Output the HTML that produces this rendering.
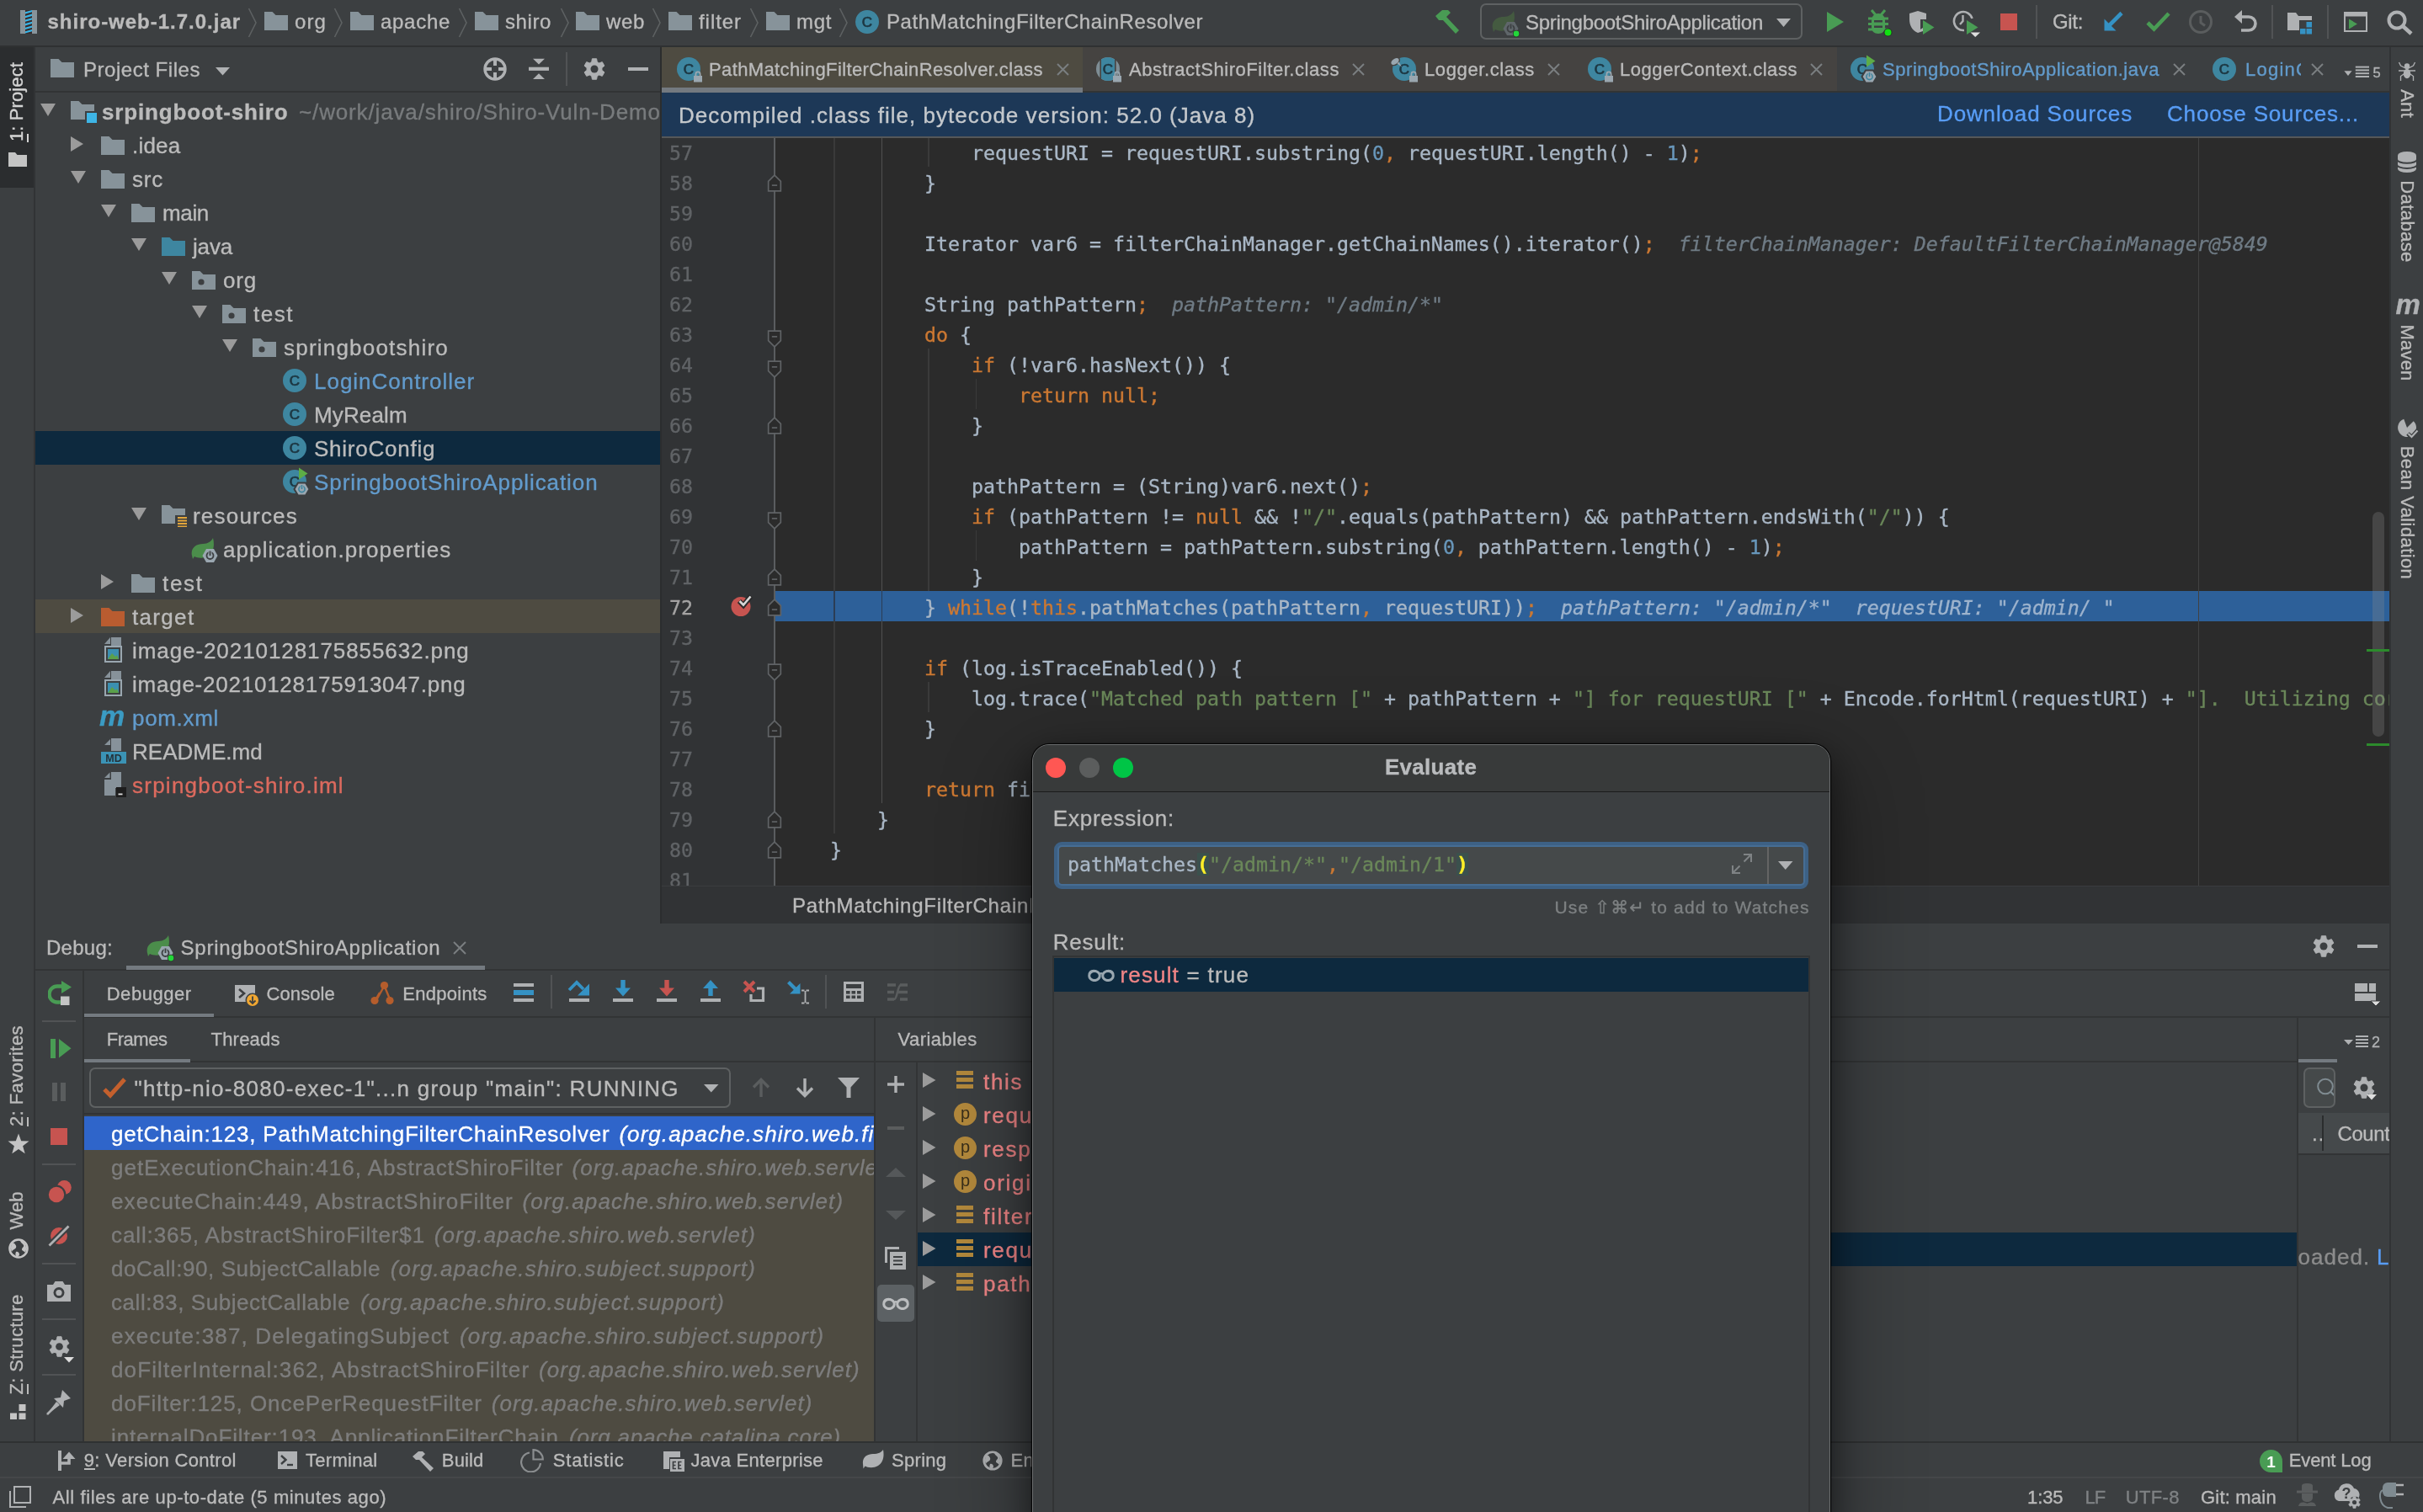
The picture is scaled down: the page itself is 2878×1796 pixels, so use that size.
<!DOCTYPE html>
<html lang="en"><head><meta charset="utf-8"><title>IDE</title>
<style>
html,body{margin:0;padding:0;}
body{width:2878px;height:1796px;overflow:hidden;background:#3c3f41;position:relative;font-family:"Liberation Sans", sans-serif;}
div,span.t,svg{position:absolute;box-sizing:border-box;}
span.t{white-space:pre;}
span.t{-webkit-text-stroke-width:0.35px;}span.c{font-family:"DejaVu Sans Mono","Liberation Mono",monospace;font-size:23.25px;line-height:36px;}
</style></head><body>
<div id="root" style="left:0;top:0;width:2878px;height:1796px;will-change:transform;">
<div style="left:0px;top:54px;width:2878px;height:2px;background:#2f3132;"></div>
<div style="left:40px;top:56px;width:2px;height:1657px;background:#313335;"></div>
<div style="left:2838px;top:56px;width:2px;height:1657px;background:#313335;"></div>
<div style="left:784px;top:56px;width:2px;height:1041px;background:#2b2d2e;"></div>
<svg style="left:24px;top:12px;" width="20" height="28" viewBox="0 0 20 28"><rect x="0" y="0" width="6" height="28" fill="#87939a"/><rect x="14" y="0" width="6" height="28" fill="#87939a"/><rect x="6" y="0" width="8" height="28" fill="#3a2c2c"/><path d="M6,2.3L14,0V2.3L6,4.6Z" fill="#35b5e8"/><path d="M6,6.8999999999999995L14,4.6V6.8999999999999995L6,9.2Z" fill="#35b5e8"/><path d="M6,11.5L14,9.2V11.5L6,13.799999999999999Z" fill="#35b5e8"/><path d="M6,16.1L14,13.8V16.1L6,18.4Z" fill="#35b5e8"/><path d="M6,20.7L14,18.4V20.7L6,23.0Z" fill="#35b5e8"/><path d="M6,25.3L14,23V25.3L6,27.6Z" fill="#35b5e8"/></svg>
<span class="t" style="left:56.5px;top:10.2px;line-height:31px;font-size:24px;color:#bbbbbb;font-weight:bold;letter-spacing:0.99px;">shiro-web-1.7.0.jar</span>
<svg style="left:544px;top:9px;" width="12" height="36" viewBox="0 0 12 36"><path d="M1.5,1L10,18L1.5,35" fill="none" stroke="#5e6263" stroke-width="1.6"/></svg>
<svg style="left:294px;top:9px;" width="12" height="36" viewBox="0 0 12 36"><path d="M1.5,1L10,18L1.5,35" fill="none" stroke="#5e6263" stroke-width="1.6"/></svg>
<svg style="left:314px;top:14px;" width="28" height="22" viewBox="0 0 28 22"><path d="M0,0H9.5L13.5,4H28V22H0Z" fill="#87939a"/></svg>
<span class="t" style="left:350px;top:10.2px;line-height:31px;font-size:24px;color:#bbbbbb;letter-spacing:1.1px;">org</span>
<svg style="left:396px;top:9px;" width="12" height="36" viewBox="0 0 12 36"><path d="M1.5,1L10,18L1.5,35" fill="none" stroke="#5e6263" stroke-width="1.6"/></svg>
<svg style="left:416px;top:14px;" width="28" height="22" viewBox="0 0 28 22"><path d="M0,0H9.5L13.5,4H28V22H0Z" fill="#87939a"/></svg>
<span class="t" style="left:452px;top:10.2px;line-height:31px;font-size:24px;color:#bbbbbb;letter-spacing:0.71px;">apache</span>
<svg style="left:564px;top:14px;" width="28" height="22" viewBox="0 0 28 22"><path d="M0,0H9.5L13.5,4H28V22H0Z" fill="#87939a"/></svg>
<span class="t" style="left:600px;top:10.2px;line-height:31px;font-size:24px;color:#bbbbbb;letter-spacing:0.59px;">shiro</span>
<svg style="left:665px;top:9px;" width="12" height="36" viewBox="0 0 12 36"><path d="M1.5,1L10,18L1.5,35" fill="none" stroke="#5e6263" stroke-width="1.6"/></svg>
<svg style="left:684px;top:14px;" width="28" height="22" viewBox="0 0 28 22"><path d="M0,0H9.5L13.5,4H28V22H0Z" fill="#87939a"/></svg>
<span class="t" style="left:720px;top:10.2px;line-height:31px;font-size:24px;color:#bbbbbb;letter-spacing:0.66px;">web</span>
<svg style="left:774px;top:9px;" width="12" height="36" viewBox="0 0 12 36"><path d="M1.5,1L10,18L1.5,35" fill="none" stroke="#5e6263" stroke-width="1.6"/></svg>
<svg style="left:794px;top:14px;" width="28" height="22" viewBox="0 0 28 22"><path d="M0,0H9.5L13.5,4H28V22H0Z" fill="#87939a"/></svg>
<span class="t" style="left:830px;top:10.2px;line-height:31px;font-size:24px;color:#bbbbbb;letter-spacing:0.94px;">filter</span>
<svg style="left:890px;top:9px;" width="12" height="36" viewBox="0 0 12 36"><path d="M1.5,1L10,18L1.5,35" fill="none" stroke="#5e6263" stroke-width="1.6"/></svg>
<svg style="left:910px;top:14px;" width="28" height="22" viewBox="0 0 28 22"><path d="M0,0H9.5L13.5,4H28V22H0Z" fill="#87939a"/></svg>
<span class="t" style="left:946px;top:10.2px;line-height:31px;font-size:24px;color:#bbbbbb;letter-spacing:0.66px;">mgt</span>
<svg style="left:996px;top:9px;" width="12" height="36" viewBox="0 0 12 36"><path d="M1.5,1L10,18L1.5,35" fill="none" stroke="#5e6263" stroke-width="1.6"/></svg>
<svg style="left:1014px;top:8px;" width="36" height="36" viewBox="-2 -4 36 36"><circle cx="14" cy="14" r="14" fill="#3e86a0"/><text x="14" y="20" text-anchor="middle" font-family="Liberation Sans, sans-serif" font-size="17" fill="#1d3742" stroke="#1d3742" stroke-width="0.7">C</text></svg>
<span class="t" style="left:1053px;top:10.2px;line-height:31px;font-size:24px;color:#bbbbbb;letter-spacing:0.6px;">PathMatchingFilterChainResolver</span>
<div style="left:0px;top:56px;width:40px;height:167px;background:#2b2d2f;"></div>
<span class="t" style="left:19.4px;top:121.0px;line-height:29px;font-size:22px;color:#d4d4d4;letter-spacing:0.11px;transform:translate(-50%,-50%) rotate(-90deg);">1: Project</span>
<svg style="left:10px;top:181px;" width="22" height="17" viewBox="0 0 22 17"><path d="M0,0H8L10.5,3H22V17H0Z" fill="#c4c4c4"/></svg>
<span class="t" style="left:19.4px;top:1278.0px;line-height:29px;font-size:22px;color:#bbbbbb;letter-spacing:0.42px;transform:translate(-50%,-50%) rotate(-90deg);">2: Favorites</span>
<svg style="left:9px;top:1346px;" width="26" height="25" viewBox="0 0 26 25"><path d="M13,0.5L16.2,9.3L25.5,9.6L18.1,15.3L20.7,24.3L13,19L5.3,24.3L7.9,15.3L0.5,9.6L9.8,9.3Z" fill="#c4c4c4"/></svg>
<span class="t" style="left:19.4px;top:1437.5px;line-height:29px;font-size:22px;color:#bbbbbb;letter-spacing:0.05px;transform:translate(-50%,-50%) rotate(-90deg);">Web</span>
<svg style="left:10px;top:1471px;" width="24" height="24" viewBox="0 0 24 24"><circle cx="12" cy="12" r="10.5" fill="none" stroke="#c4c4c4" stroke-width="2.6"/><path d="M5,5C8,6 10,9 9,11C8,13 5,13 4,16C3,14 2,9 5,5ZM14,2C14,5 17,6 18,8C19,10 16,11 16,13C16,15 19,15 20,17C22,13 22,5 14,2ZM9,16C11,15 13,17 13,19C13,21 11,22 10,22C8,21 8,18 9,16Z" fill="#c4c4c4"/></svg>
<span class="t" style="left:19.4px;top:1596.5px;line-height:29px;font-size:22px;color:#bbbbbb;letter-spacing:0.34px;transform:translate(-50%,-50%) rotate(-90deg);">Z: Structure</span>
<svg style="left:12px;top:1667.5px;" width="19" height="18.5" viewBox="0 0 19 18.5"><rect x="0" y="10.5" width="8" height="8" fill="#c4c4c4"/><rect x="10.5" y="10.5" width="8" height="8" fill="#c4c4c4"/><rect x="10.5" y="0" width="8" height="8" fill="#c4c4c4"/></svg>
<div style="left:31.5px;top:159px;width:2px;height:10px;background:#d4d4d4;"></div>
<div style="left:31.5px;top:1327px;width:2px;height:11px;background:#bbbbbb;"></div>
<div style="left:31.5px;top:1644px;width:2px;height:12px;background:#bbbbbb;"></div>
<svg style="left:60px;top:70px;" width="28" height="22" viewBox="0 0 28 22"><path d="M0,0H9.5L13.5,4H28V22H0Z" fill="#87939a"/></svg>
<span class="t" style="left:99px;top:67.2px;line-height:31px;font-size:24px;color:#bbbbbb;letter-spacing:0.53px;">Project Files</span>
<svg style="left:256px;top:80px;" width="17" height="9.5" viewBox="0 0 17 9.5"><path d="M0,0H17L8.5,9.5Z" fill="#afb1b3"/></svg>
<svg style="left:574px;top:68px;" width="28" height="28" viewBox="0 0 28 28"><circle cx="14" cy="14" r="12" fill="none" stroke="#afb1b3" stroke-width="3.4"/><path d="M14,1V10M14,18V27M1,14H10M18,14H27" stroke="#afb1b3" stroke-width="4"/></svg>
<svg style="left:627px;top:69px;" width="26" height="26" viewBox="0 0 26 26"><path d="M1,12.8H25" stroke="#afb1b3" stroke-width="4.2"/><path d="M6,0.7H20L13,7.4Z M6,25H20L13,18.3Z" fill="#afb1b3"/></svg>
<div style="left:672px;top:62px;width:2px;height:40px;background:#515355;"></div>
<svg style="left:693px;top:69px;" width="26" height="26" viewBox="-0.5 -0.5 27 27"><path d="M10.29,0.29L15.71,0.29L16.40,4.24L18.89,5.67L22.66,4.30L25.37,8.99L22.29,11.56L22.29,14.44L25.37,17.01L22.66,21.70L18.89,20.33L16.40,21.76L15.71,25.71L10.29,25.71L9.60,21.76L7.11,20.33L3.34,21.70L0.63,17.01L3.71,14.44L3.71,11.56L0.63,8.99L3.34,4.30L7.11,5.67L9.60,4.24Z" fill="#afb1b3" stroke="#afb1b3" stroke-width="1" stroke-linejoin="round"/><circle cx="13" cy="13" r="4.7" fill="#3c3f41"/></svg>
<div style="left:746px;top:80px;width:24px;height:4px;background:#afb1b3;"></div>
<div style="left:42px;top:108px;width:742px;height:2px;background:#323435;"></div>
<svg style="left:48px;top:123px;" width="18" height="15" viewBox="0 0 18 15"><path d="M0,0H18L9.0,15Z" fill="#9b9b9b"/></svg>
<svg style="left:84px;top:120px;" width="28" height="22" viewBox="0 0 28 22"><path d="M0,0H9.5L13.5,4H28V22H0Z" fill="#87939a"/></svg><svg style="left:101px;top:132px;" width="14" height="14" viewBox="0 0 14 14"><rect x="0" y="0" width="14" height="14" fill="#3c3f41"/><rect x="2" y="2" width="12" height="12" fill="#3eb5e5"/></svg>
<span class="t" style="left:121px;top:116.0px;line-height:34px;font-size:26px;color:#bbbbbb;font-weight:bold;letter-spacing:0.84px;">srpingboot-shiro</span>
<span class="t" style="left:355px;top:116.0px;line-height:34px;font-size:26px;color:#787b7d;letter-spacing:0.86px;width:429px;overflow:hidden;">~/work/java/shiro/Shiro-Vuln-Demo</span>
<svg style="left:84px;top:162px;" width="15" height="18" viewBox="0 0 15 18"><path d="M0,0L15,9.0L0,18Z" fill="#9b9b9b"/></svg>
<svg style="left:120px;top:162px;" width="28" height="22" viewBox="0 0 28 22"><path d="M0,0H9.5L13.5,4H28V22H0Z" fill="#87939a"/></svg>
<span class="t" style="left:157px;top:156.0px;line-height:34px;font-size:26px;color:#bbbbbb;letter-spacing:0.22px;">.idea</span>
<svg style="left:84px;top:203px;" width="18" height="15" viewBox="0 0 18 15"><path d="M0,0H18L9.0,15Z" fill="#9b9b9b"/></svg>
<svg style="left:120px;top:202px;" width="28" height="22" viewBox="0 0 28 22"><path d="M0,0H9.5L13.5,4H28V22H0Z" fill="#87939a"/></svg>
<span class="t" style="left:157px;top:196.0px;line-height:34px;font-size:26px;color:#bbbbbb;letter-spacing:0.78px;">src</span>
<svg style="left:120px;top:243px;" width="18" height="15" viewBox="0 0 18 15"><path d="M0,0H18L9.0,15Z" fill="#9b9b9b"/></svg>
<svg style="left:156px;top:242px;" width="28" height="22" viewBox="0 0 28 22"><path d="M0,0H9.5L13.5,4H28V22H0Z" fill="#87939a"/></svg>
<span class="t" style="left:193px;top:236.0px;line-height:34px;font-size:26px;color:#bbbbbb;letter-spacing:-0.34px;">main</span>
<svg style="left:156px;top:283px;" width="18" height="15" viewBox="0 0 18 15"><path d="M0,0H18L9.0,15Z" fill="#9b9b9b"/></svg>
<svg style="left:192px;top:282px;" width="28" height="22" viewBox="0 0 28 22"><path d="M0,0H9.5L13.5,4H28V22H0Z" fill="#3e86a0"/></svg>
<span class="t" style="left:229px;top:276.0px;line-height:34px;font-size:26px;color:#bbbbbb;letter-spacing:-0.18px;">java</span>
<svg style="left:192px;top:323px;" width="18" height="15" viewBox="0 0 18 15"><path d="M0,0H18L9.0,15Z" fill="#9b9b9b"/></svg>
<svg style="left:228px;top:322px;" width="28" height="22" viewBox="0 0 28 22"><path d="M0,0H9.5L13.5,4H28V22H0Z" fill="#87939a"/><circle cx="11" cy="13" r="3.6" fill="#3c3f41"/></svg>
<span class="t" style="left:265px;top:316.0px;line-height:34px;font-size:26px;color:#bbbbbb;letter-spacing:0.81px;">org</span>
<svg style="left:228px;top:363px;" width="18" height="15" viewBox="0 0 18 15"><path d="M0,0H18L9.0,15Z" fill="#9b9b9b"/></svg>
<svg style="left:264px;top:362px;" width="28" height="22" viewBox="0 0 28 22"><path d="M0,0H9.5L13.5,4H28V22H0Z" fill="#87939a"/><circle cx="11" cy="13" r="3.6" fill="#3c3f41"/></svg>
<span class="t" style="left:301px;top:356.0px;line-height:34px;font-size:26px;color:#bbbbbb;letter-spacing:1.52px;">test</span>
<svg style="left:264px;top:403px;" width="18" height="15" viewBox="0 0 18 15"><path d="M0,0H18L9.0,15Z" fill="#9b9b9b"/></svg>
<svg style="left:300px;top:402px;" width="28" height="22" viewBox="0 0 28 22"><path d="M0,0H9.5L13.5,4H28V22H0Z" fill="#87939a"/><circle cx="11" cy="13" r="3.6" fill="#3c3f41"/></svg>
<span class="t" style="left:337px;top:396.0px;line-height:34px;font-size:26px;color:#bbbbbb;letter-spacing:1.21px;">springbootshiro</span>
<svg style="left:334px;top:434px;" width="36" height="36" viewBox="-2 -4 36 36"><circle cx="14" cy="14" r="14" fill="#3e86a0"/><text x="14" y="20" text-anchor="middle" font-family="Liberation Sans, sans-serif" font-size="17" fill="#1d3742" stroke="#1d3742" stroke-width="0.7">C</text></svg>
<span class="t" style="left:373px;top:436.0px;line-height:34px;font-size:26px;color:#629bcc;letter-spacing:0.98px;">LoginController</span>
<svg style="left:334px;top:474px;" width="36" height="36" viewBox="-2 -4 36 36"><circle cx="14" cy="14" r="14" fill="#3e86a0"/><text x="14" y="20" text-anchor="middle" font-family="Liberation Sans, sans-serif" font-size="17" fill="#1d3742" stroke="#1d3742" stroke-width="0.7">C</text></svg>
<span class="t" style="left:373px;top:476.0px;line-height:34px;font-size:26px;color:#bbbbbb;letter-spacing:0.14px;">MyRealm</span>
<div style="left:42px;top:512px;width:742px;height:40px;background:#0d293e;"></div>
<svg style="left:334px;top:514px;" width="36" height="36" viewBox="-2 -4 36 36"><circle cx="14" cy="14" r="14" fill="#3e86a0"/><text x="14" y="20" text-anchor="middle" font-family="Liberation Sans, sans-serif" font-size="17" fill="#1d3742" stroke="#1d3742" stroke-width="0.7">C</text></svg>
<span class="t" style="left:373px;top:516.0px;line-height:34px;font-size:26px;color:#bbbbbb;letter-spacing:0.76px;">ShiroConfig</span>
<svg style="left:334px;top:554px;" width="36" height="36" viewBox="-2 -4 36 36"><circle cx="14" cy="14" r="14" fill="#3e86a0"/><text x="14" y="20" text-anchor="middle" font-family="Liberation Sans, sans-serif" font-size="17" fill="#1d3742" stroke="#1d3742" stroke-width="0.7">C</text></svg><svg style="left:348px;top:552px;" width="24" height="40" viewBox="0 0 24 40"><path d="M7,3.5L17.5,10.5L7,17.5Z" fill="#5dad46"/><path d="M6,21.5H15L19.5,29L15,36.5H6L1.5,29Z" fill="#9aa7b0" stroke="#3c3f41" stroke-width="2"/><circle cx="10.5" cy="29" r="3.6" fill="none" stroke="#3e86a0" stroke-width="1.6"/><path d="M10.5,24V29" stroke="#9aa7b0" stroke-width="3.6"/><path d="M10.5,24V29" stroke="#3e86a0" stroke-width="1.6"/></svg>
<span class="t" style="left:373px;top:556.0px;line-height:34px;font-size:26px;color:#629bcc;letter-spacing:0.92px;">SpringbootShiroApplication</span>
<svg style="left:156px;top:603px;" width="18" height="15" viewBox="0 0 18 15"><path d="M0,0H18L9.0,15Z" fill="#9b9b9b"/></svg>
<svg style="left:192px;top:600px;" width="28" height="22" viewBox="0 0 28 22"><path d="M0,0H9.5L13.5,4H28V22H0Z" fill="#87939a"/></svg><svg style="left:208px;top:612px;" width="14" height="14" viewBox="0 0 14 14"><rect width="14" height="14" fill="#3c3f41"/><rect x="3" y="2" width="11" height="2" fill="#e2a53a"/><rect x="3" y="5.5" width="11" height="2" fill="#e2a53a"/><rect x="3" y="9" width="11" height="2" fill="#e2a53a"/><rect x="3" y="12.5" width="11" height="2" fill="#e2a53a"/></svg>
<span class="t" style="left:229px;top:596.0px;line-height:34px;font-size:26px;color:#bbbbbb;letter-spacing:1.2px;">resources</span>
<svg style="left:227px;top:639px;" width="34" height="32" viewBox="0 0 34 32"><path d="M1,21C-1,12 6,7 14,7C20,7 24,4 26,0C28,8 27,16 21,21C15,25 8,24 4,22L2,25Z" fill="#4b8d4b"/><path d="M18,13H27L31.5,21L27,29H18L13.5,21Z" fill="#9aa7b0"/><circle cx="22.5" cy="21" r="4" fill="none" stroke="#3c3f41" stroke-width="1.8"/><path d="M22.5,15.5V21" stroke="#9aa7b0" stroke-width="4"/><path d="M22.5,15.5V21" stroke="#3c3f41" stroke-width="1.8"/></svg>
<span class="t" style="left:265px;top:636.0px;line-height:34px;font-size:26px;color:#bbbbbb;letter-spacing:1.1px;">application.properties</span>
<svg style="left:120px;top:682px;" width="15" height="18" viewBox="0 0 15 18"><path d="M0,0L15,9.0L0,18Z" fill="#9b9b9b"/></svg>
<svg style="left:156px;top:682px;" width="28" height="22" viewBox="0 0 28 22"><path d="M0,0H9.5L13.5,4H28V22H0Z" fill="#87939a"/></svg>
<span class="t" style="left:193px;top:676.0px;line-height:34px;font-size:26px;color:#bbbbbb;letter-spacing:1.72px;">test</span>
<div style="left:42px;top:712px;width:742px;height:40px;background:#4e4b41;"></div>
<svg style="left:84px;top:722px;" width="15" height="18" viewBox="0 0 15 18"><path d="M0,0L15,9.0L0,18Z" fill="#9b9b9b"/></svg>
<svg style="left:120px;top:722px;" width="28" height="22" viewBox="0 0 28 22"><path d="M0,0H9.5L13.5,4H28V22H0Z" fill="#b95c30"/></svg>
<span class="t" style="left:157px;top:716.0px;line-height:34px;font-size:26px;color:#bbbbbb;letter-spacing:1.33px;">target</span>
<svg style="left:124px;top:757px;" width="22" height="30" viewBox="0 0 22 30"><path d="M8,0H20V12H8Z M0,8L7,0V8Z" fill="#9aa7b0" opacity="0.8"/><rect x="1" y="11" width="19" height="18" fill="none" stroke="#9aa7b0" stroke-width="2"/><rect x="4" y="14" width="13" height="12" fill="#3b8fb0"/><path d="M4,26L9,19L13,23L15,21L17,26Z" fill="#5ba04a"/></svg>
<span class="t" style="left:157px;top:756.0px;line-height:34px;font-size:26px;color:#bbbbbb;letter-spacing:0.92px;">image-20210128175855632.png</span>
<svg style="left:124px;top:797px;" width="22" height="30" viewBox="0 0 22 30"><path d="M8,0H20V12H8Z M0,8L7,0V8Z" fill="#9aa7b0" opacity="0.8"/><rect x="1" y="11" width="19" height="18" fill="none" stroke="#9aa7b0" stroke-width="2"/><rect x="4" y="14" width="13" height="12" fill="#3b8fb0"/><path d="M4,26L9,19L13,23L15,21L17,26Z" fill="#5ba04a"/></svg>
<span class="t" style="left:157px;top:796.0px;line-height:34px;font-size:26px;color:#bbbbbb;letter-spacing:0.76px;">image-20210128175913047.png</span>

<span class="t" style="left:157px;top:836.0px;line-height:34px;font-size:26px;color:#629bcc;letter-spacing:0.68px;">pom.xml</span>
<span class="t" style="left:118px;top:828.2px;line-height:44px;font-size:34px;color:#3b9bc3;font-weight:bold;font-style:italic;">m</span>
<svg style="left:120px;top:877px;" width="30" height="30" viewBox="0 0 30 30"><path d="M12,0H24V15H12Z M4,8L11,1V8Z" fill="#9aa7b0" opacity="0.8"/><rect x="0" y="16" width="30" height="14" fill="#3b93b5"/><text x="15" y="28" text-anchor="middle" font-family="Liberation Sans, sans-serif" font-weight="bold" font-size="12.5" fill="#25323a">MD</text></svg>
<span class="t" style="left:157px;top:876.0px;line-height:34px;font-size:26px;color:#bbbbbb;letter-spacing:0.02px;">README.md</span>
<svg style="left:124px;top:917px;" width="26" height="30" viewBox="0 0 26 30"><path d="M8,0H20V19H13V28H0V9H8Z M0,7L6.5,0.5V7Z" fill="#9aa7b0" opacity="0.8"/><rect x="14" y="18" width="12" height="12" fill="#1e1e1e"/><rect x="16.5" y="25.5" width="5" height="1.8" fill="#dddddd"/></svg>
<span class="t" style="left:157px;top:916.0px;line-height:34px;font-size:26px;color:#dc6a5e;letter-spacing:1.25px;">srpingboot-shiro.iml</span>
<div style="left:786px;top:56px;width:2052px;height:54px;background:#3c3f41;"></div>
<div style="left:786px;top:56px;width:1396px;height:52px;background:#454341;"></div>
<div style="left:786px;top:56px;width:500px;height:48px;background:#4e4b41;"></div>
<div style="left:786px;top:108px;width:2052px;height:2px;background:#323435;"></div>
<div style="left:786px;top:104px;width:500px;height:6px;background:#747a80;"></div>
<svg style="left:802px;top:64px;" width="36" height="36" viewBox="-2 -4 36 36"><circle cx="14" cy="14" r="14" fill="#3e86a0"/><text x="14" y="20" text-anchor="middle" font-family="Liberation Sans, sans-serif" font-size="17" fill="#1d3742" stroke="#1d3742" stroke-width="0.7">C</text><rect x="20" y="22" width="10" height="7.5" fill="#9aa7b0"/><path d="M22.4,22V19.9a2.6,2.6 0 0 1 5.2,0V22" fill="none" stroke="#9aa7b0" stroke-width="1.8"/></svg>
<span class="t" style="left:842px;top:67.9px;line-height:29px;font-size:22px;color:#bbbbbb;letter-spacing:0.38px;">PathMatchingFilterChainResolver.class</span>
<svg style="left:1255px;top:75px;" width="15" height="15" viewBox="0 0 15 15"><path d="M1,1L14,14M14,1L1,14" stroke="#7a7e80" stroke-width="2" fill="none"/></svg>
<svg style="left:1300px;top:64px;" width="36" height="36" viewBox="-2 -4 36 36"><circle cx="14" cy="14" r="14" fill="#7e8d95"/><path d="M6,2.5A14,14 0 0 1 22,2.5V25.5A14,14 0 0 1 6,25.5Z" fill="#3e86a0"/><path d="M5.2,0V28M22.8,0V28" stroke="#454341" stroke-width="1.6"/><text x="14" y="20" text-anchor="middle" font-family="Liberation Sans, sans-serif" font-size="17" fill="#1d3742" stroke="#1d3742" stroke-width="0.7">C</text><rect x="20" y="22" width="10" height="7.5" fill="#9aa7b0"/><path d="M22.4,22V19.9a2.6,2.6 0 0 1 5.2,0V22" fill="none" stroke="#9aa7b0" stroke-width="1.8"/></svg>
<span class="t" style="left:1341px;top:67.9px;line-height:29px;font-size:22px;color:#bbbbbb;letter-spacing:0.56px;">AbstractShiroFilter.class</span>
<svg style="left:1606px;top:75px;" width="15" height="15" viewBox="0 0 15 15"><path d="M1,1L14,14M14,1L1,14" stroke="#7a7e80" stroke-width="2" fill="none"/></svg>
<svg style="left:1652px;top:64px;" width="36" height="36" viewBox="-2 -4 36 36"><circle cx="14" cy="14" r="14" fill="#3e86a0"/><text x="14" y="20" text-anchor="middle" font-family="Liberation Sans, sans-serif" font-size="17" fill="#1d3742" stroke="#1d3742" stroke-width="0.7">C</text><rect x="20" y="22" width="10" height="7.5" fill="#9aa7b0"/><path d="M22.4,22V19.9a2.6,2.6 0 0 1 5.2,0V22" fill="none" stroke="#9aa7b0" stroke-width="1.8"/></svg>
<svg style="left:1650px;top:64px;" width="18" height="18" viewBox="0 0 18 18"><ellipse cx="7" cy="9" rx="6.6" ry="4.6" transform="rotate(-35 7 9)" fill="#454341"/><ellipse cx="7" cy="9" rx="5.2" ry="3.2" transform="rotate(-35 7 9)" fill="#9aa7b0"/><path d="M9.5,11.5L15,15.5L11.5,9.5Z" fill="#9aa7b0"/></svg>
<span class="t" style="left:1692px;top:67.9px;line-height:29px;font-size:22px;color:#bbbbbb;letter-spacing:0.62px;">Logger.class</span>
<svg style="left:1838px;top:75px;" width="15" height="15" viewBox="0 0 15 15"><path d="M1,1L14,14M14,1L1,14" stroke="#7a7e80" stroke-width="2" fill="none"/></svg>
<svg style="left:1884px;top:64px;" width="36" height="36" viewBox="-2 -4 36 36"><circle cx="14" cy="14" r="14" fill="#3e86a0"/><text x="14" y="20" text-anchor="middle" font-family="Liberation Sans, sans-serif" font-size="17" fill="#1d3742" stroke="#1d3742" stroke-width="0.7">C</text><rect x="20" y="22" width="10" height="7.5" fill="#9aa7b0"/><path d="M22.4,22V19.9a2.6,2.6 0 0 1 5.2,0V22" fill="none" stroke="#9aa7b0" stroke-width="1.8"/></svg>
<span class="t" style="left:1924px;top:67.9px;line-height:29px;font-size:22px;color:#bbbbbb;letter-spacing:0.55px;">LoggerContext.class</span>
<svg style="left:2150px;top:75px;" width="15" height="15" viewBox="0 0 15 15"><path d="M1,1L14,14M14,1L1,14" stroke="#7a7e80" stroke-width="2" fill="none"/></svg>
<svg style="left:2196px;top:64px;" width="36" height="36" viewBox="-2 -4 36 36"><circle cx="14" cy="14" r="14" fill="#3e86a0"/><text x="14" y="20" text-anchor="middle" font-family="Liberation Sans, sans-serif" font-size="17" fill="#1d3742" stroke="#1d3742" stroke-width="0.7">C</text></svg><svg style="left:2210px;top:62px;" width="24" height="40" viewBox="0 0 24 40"><path d="M7,3.5L17.5,10.5L7,17.5Z" fill="#5dad46"/><path d="M6,21.5H15L19.5,29L15,36.5H6L1.5,29Z" fill="#9aa7b0" stroke="#3c3f41" stroke-width="2"/><circle cx="10.5" cy="29" r="3.6" fill="none" stroke="#3e86a0" stroke-width="1.6"/><path d="M10.5,24V29" stroke="#9aa7b0" stroke-width="3.6"/><path d="M10.5,24V29" stroke="#3e86a0" stroke-width="1.6"/></svg>
<span class="t" style="left:2236px;top:67.9px;line-height:29px;font-size:22px;color:#629bcc;letter-spacing:0.55px;">SpringbootShiroApplication.java</span>
<svg style="left:2581px;top:75px;" width="15" height="15" viewBox="0 0 15 15"><path d="M1,1L14,14M14,1L1,14" stroke="#7a7e80" stroke-width="2" fill="none"/></svg>
<svg style="left:2626px;top:64px;" width="36" height="36" viewBox="-2 -4 36 36"><circle cx="14" cy="14" r="14" fill="#3e86a0"/><text x="14" y="20" text-anchor="middle" font-family="Liberation Sans, sans-serif" font-size="17" fill="#1d3742" stroke="#1d3742" stroke-width="0.7">C</text></svg>
<span class="t" style="left:2667px;top:67.9px;line-height:29px;font-size:22px;color:#629bcc;letter-spacing:1.25px;width:65.5px;overflow:hidden;">LoginController.java</span>
<svg style="left:2745px;top:75px;" width="15" height="15" viewBox="0 0 15 15"><path d="M1,1L14,14M14,1L1,14" stroke="#7a7e80" stroke-width="2" fill="none"/></svg>
<svg style="left:2784px;top:78px;" width="44" height="20" viewBox="0 0 44 20"><path d="M0.4,6.2H9.6L5,12Z" fill="#afb1b3"/><rect x="13.8" y="0.6" width="16.2" height="2" fill="#afb1b3"/><rect x="13.8" y="4.4" width="16.2" height="2" fill="#afb1b3"/><rect x="13.8" y="8.2" width="16.2" height="2" fill="#afb1b3"/><rect x="13.8" y="12" width="16.2" height="2" fill="#afb1b3"/></svg>
<span class="t" style="left:2818.5px;top:76.0px;line-height:21px;font-size:16.5px;color:#afb1b3;">5</span>
<div style="left:786px;top:110px;width:2052px;height:52px;background:#1d3857;"></div>
<div style="left:786px;top:162px;width:2052px;height:2px;background:#555759;"></div>
<span class="t" style="left:806px;top:119.5px;line-height:34px;font-size:26px;color:#c4c8cc;letter-spacing:1.03px;">Decompiled .class file, bytecode version: 52.0 (Java 8)</span>
<span class="t" style="left:2301px;top:117.5px;line-height:34px;font-size:26px;color:#589df6;letter-spacing:0.86px;">Download Sources</span>
<span class="t" style="left:2574px;top:117.5px;line-height:34px;font-size:26px;color:#589df6;letter-spacing:0.83px;">Choose Sources...</span>
<div id="code" style="left:786px;top:164px;width:2052px;height:889px;background:#2b2b2b;overflow:hidden;">
<div style="left:-786px;top:-164px;width:2878px;height:1796px;">
<div style="left:786px;top:164px;width:134px;height:889px;background:#313335;"></div>
<div style="left:921px;top:702px;width:1917px;height:36px;background:#2d6099;"></div>
<div style="left:786px;top:702px;width:134px;height:36px;background:#313335;"></div>
<div style="left:990px;top:164px;width:1.5px;height:826px;background:#3a3a3a;"></div>
<div style="left:1046.5px;top:164px;width:1.5px;height:790px;background:#505050;"></div>
<div style="left:1102px;top:164px;width:1.5px;height:34px;background:#3a3a3a;"></div>
<div style="left:1102px;top:414px;width:1.5px;height:288px;background:#3a3a3a;"></div>
<div style="left:1102px;top:810px;width:1.5px;height:36px;background:#3a3a3a;"></div>
<div style="left:1158.5px;top:450px;width:1.5px;height:36px;background:#3a3a3a;"></div>
<div style="left:1158.5px;top:630px;width:1.5px;height:36px;background:#3a3a3a;"></div>
<div style="left:990px;top:702px;width:1.5px;height:36px;background:#2b3d55;"></div>
<div style="left:1046.5px;top:702px;width:1.5px;height:36px;background:#2b3d55;"></div>
<div style="left:2610.5px;top:164px;width:1.5px;height:889px;background:#414141;"></div>
<div style="left:919.2px;top:164px;width:1.6px;height:889px;background:#5a5d5f;"></div>
<span class="t c" style="left:795px;top:164.0px;"><span style="color:#606366;">57</span></span>
<span class="t c" style="left:930px;top:164.0px;"><span style="color:#a9b7c6;">                requestURI = requestURI.substring(</span><span style="color:#6897bb;">0</span><span style="color:#cc7832;">,</span><span style="color:#a9b7c6;"> requestURI.length() - </span><span style="color:#6897bb;">1</span><span style="color:#a9b7c6;">)</span><span style="color:#cc7832;">;</span></span>
<span class="t c" style="left:795px;top:200.0px;"><span style="color:#606366;">58</span></span>
<span class="t c" style="left:930px;top:200.0px;"><span style="color:#a9b7c6;">            }</span></span>
<span class="t c" style="left:795px;top:236.0px;"><span style="color:#606366;">59</span></span>
<span class="t c" style="left:795px;top:272.0px;"><span style="color:#606366;">60</span></span>
<span class="t c" style="left:930px;top:272.0px;"><span style="color:#a9b7c6;">            Iterator var6 = filterChainManager.getChainNames().iterator()</span><span style="color:#cc7832;">;</span><span style="color:#6f7b85;font-style:italic;">  filterChainManager: DefaultFilterChainManager@5849</span></span>
<span class="t c" style="left:795px;top:308.0px;"><span style="color:#606366;">61</span></span>
<span class="t c" style="left:795px;top:344.0px;"><span style="color:#606366;">62</span></span>
<span class="t c" style="left:930px;top:344.0px;"><span style="color:#a9b7c6;">            String pathPattern</span><span style="color:#cc7832;">;</span><span style="color:#6f7b85;font-style:italic;">  pathPattern: &quot;/admin/*&quot;</span></span>
<span class="t c" style="left:795px;top:380.0px;"><span style="color:#606366;">63</span></span>
<span class="t c" style="left:930px;top:380.0px;"><span style="color:#a9b7c6;">            </span><span style="color:#cc7832;">do</span><span style="color:#a9b7c6;"> {</span></span>
<span class="t c" style="left:795px;top:416.0px;"><span style="color:#606366;">64</span></span>
<span class="t c" style="left:930px;top:416.0px;"><span style="color:#a9b7c6;">                </span><span style="color:#cc7832;">if</span><span style="color:#a9b7c6;"> (!var6.hasNext()) {</span></span>
<span class="t c" style="left:795px;top:452.0px;"><span style="color:#606366;">65</span></span>
<span class="t c" style="left:930px;top:452.0px;"><span style="color:#a9b7c6;">                    </span><span style="color:#cc7832;">return null;</span></span>
<span class="t c" style="left:795px;top:488.0px;"><span style="color:#606366;">66</span></span>
<span class="t c" style="left:930px;top:488.0px;"><span style="color:#a9b7c6;">                }</span></span>
<span class="t c" style="left:795px;top:524.0px;"><span style="color:#606366;">67</span></span>
<span class="t c" style="left:795px;top:560.0px;"><span style="color:#606366;">68</span></span>
<span class="t c" style="left:930px;top:560.0px;"><span style="color:#a9b7c6;">                pathPattern = (String)var6.next()</span><span style="color:#cc7832;">;</span></span>
<span class="t c" style="left:795px;top:596.0px;"><span style="color:#606366;">69</span></span>
<span class="t c" style="left:930px;top:596.0px;"><span style="color:#a9b7c6;">                </span><span style="color:#cc7832;">if</span><span style="color:#a9b7c6;"> (pathPattern != </span><span style="color:#cc7832;">null</span><span style="color:#a9b7c6;"> &amp;&amp; !</span><span style="color:#6a8759;">&quot;/&quot;</span><span style="color:#a9b7c6;">.equals(pathPattern) &amp;&amp; pathPattern.endsWith(</span><span style="color:#6a8759;">&quot;/&quot;</span><span style="color:#a9b7c6;">)) {</span></span>
<span class="t c" style="left:795px;top:632.0px;"><span style="color:#606366;">70</span></span>
<span class="t c" style="left:930px;top:632.0px;"><span style="color:#a9b7c6;">                    pathPattern = pathPattern.substring(</span><span style="color:#6897bb;">0</span><span style="color:#cc7832;">,</span><span style="color:#a9b7c6;"> pathPattern.length() - </span><span style="color:#6897bb;">1</span><span style="color:#a9b7c6;">)</span><span style="color:#cc7832;">;</span></span>
<span class="t c" style="left:795px;top:668.0px;"><span style="color:#606366;">71</span></span>
<span class="t c" style="left:930px;top:668.0px;"><span style="color:#a9b7c6;">                }</span></span>
<span class="t c" style="left:795px;top:704.0px;"><span style="color:#a4a3a3;">72</span></span>
<span class="t c" style="left:930px;top:704.0px;"><span style="color:#a9b7c6;">            } </span><span style="color:#cc7832;">while</span><span style="color:#a9b7c6;">(!</span><span style="color:#cc7832;">this</span><span style="color:#a9b7c6;">.pathMatches(pathPattern</span><span style="color:#cc7832;">,</span><span style="color:#a9b7c6;"> requestURI))</span><span style="color:#cc7832;">;</span><span style="color:#9db3cd;font-style:italic;">  pathPattern: &quot;/admin/*&quot;  requestURI: &quot;/admin/ &quot;</span></span>
<span class="t c" style="left:795px;top:740.0px;"><span style="color:#606366;">73</span></span>
<span class="t c" style="left:795px;top:776.0px;"><span style="color:#606366;">74</span></span>
<span class="t c" style="left:930px;top:776.0px;"><span style="color:#a9b7c6;">            </span><span style="color:#cc7832;">if</span><span style="color:#a9b7c6;"> (log.isTraceEnabled()) {</span></span>
<span class="t c" style="left:795px;top:812.0px;"><span style="color:#606366;">75</span></span>
<span class="t c" style="left:930px;top:812.0px;"><span style="color:#a9b7c6;">                log.trace(</span><span style="color:#6a8759;">&quot;Matched path pattern [&quot;</span><span style="color:#a9b7c6;"> + pathPattern + </span><span style="color:#6a8759;">&quot;] for requestURI [&quot;</span><span style="color:#a9b7c6;"> + Encode.forHtml(requestURI) + </span><span style="color:#6a8759;">&quot;].  Utilizing corresponding filter chain...&quot;</span><span style="color:#a9b7c6;">)</span><span style="color:#cc7832;">;</span></span>
<span class="t c" style="left:795px;top:848.0px;"><span style="color:#606366;">76</span></span>
<span class="t c" style="left:930px;top:848.0px;"><span style="color:#a9b7c6;">            }</span></span>
<span class="t c" style="left:795px;top:884.0px;"><span style="color:#606366;">77</span></span>
<span class="t c" style="left:795px;top:920.0px;"><span style="color:#606366;">78</span></span>
<span class="t c" style="left:930px;top:920.0px;"><span style="color:#a9b7c6;">            </span><span style="color:#cc7832;">return</span><span style="color:#a9b7c6;"> filterChainManager.proxy(originalChain</span><span style="color:#cc7832;">,</span><span style="color:#a9b7c6;"> pathPattern)</span><span style="color:#cc7832;">;</span></span>
<span class="t c" style="left:795px;top:956.0px;"><span style="color:#606366;">79</span></span>
<span class="t c" style="left:930px;top:956.0px;"><span style="color:#a9b7c6;">        }</span></span>
<span class="t c" style="left:795px;top:992.0px;"><span style="color:#606366;">80</span></span>
<span class="t c" style="left:930px;top:992.0px;"><span style="color:#a9b7c6;">    }</span></span>
<span class="t c" style="left:795px;top:1028.0px;"><span style="color:#606366;">81</span></span>
<svg style="left:911px;top:207px;" width="18" height="21" viewBox="-0.5 0 17 20"><path d="M8,1L15,8V19H1V8Z" fill="#2b2b2b" stroke="#606366" stroke-width="1.6"/><path d="M5,12.5H11" stroke="#606366" stroke-width="1.6"/></svg>
<svg style="left:911px;top:391.5px;" width="18" height="21" viewBox="-0.5 0 17 20"><path d="M1,1H15V12L8,19L1,12Z" fill="#2b2b2b" stroke="#606366" stroke-width="1.6"/><path d="M5,7.5H11" stroke="#606366" stroke-width="1.6"/></svg>
<svg style="left:911px;top:427.5px;" width="18" height="21" viewBox="-0.5 0 17 20"><path d="M1,1H15V12L8,19L1,12Z" fill="#2b2b2b" stroke="#606366" stroke-width="1.6"/><path d="M5,7.5H11" stroke="#606366" stroke-width="1.6"/></svg>
<svg style="left:911px;top:495px;" width="18" height="21" viewBox="-0.5 0 17 20"><path d="M8,1L15,8V19H1V8Z" fill="#2b2b2b" stroke="#606366" stroke-width="1.6"/><path d="M5,12.5H11" stroke="#606366" stroke-width="1.6"/></svg>
<svg style="left:911px;top:607.5px;" width="18" height="21" viewBox="-0.5 0 17 20"><path d="M1,1H15V12L8,19L1,12Z" fill="#2b2b2b" stroke="#606366" stroke-width="1.6"/><path d="M5,7.5H11" stroke="#606366" stroke-width="1.6"/></svg>
<svg style="left:911px;top:675px;" width="18" height="21" viewBox="-0.5 0 17 20"><path d="M8,1L15,8V19H1V8Z" fill="#2b2b2b" stroke="#606366" stroke-width="1.6"/><path d="M5,12.5H11" stroke="#606366" stroke-width="1.6"/></svg>
<svg style="left:911px;top:711px;" width="18" height="21" viewBox="-0.5 0 17 20"><path d="M8,1L15,8V19H1V8Z" fill="#2b2b2b" stroke="#606366" stroke-width="1.6"/><path d="M5,12.5H11" stroke="#606366" stroke-width="1.6"/></svg>
<svg style="left:911px;top:787.5px;" width="18" height="21" viewBox="-0.5 0 17 20"><path d="M1,1H15V12L8,19L1,12Z" fill="#2b2b2b" stroke="#606366" stroke-width="1.6"/><path d="M5,7.5H11" stroke="#606366" stroke-width="1.6"/></svg>
<svg style="left:911px;top:855px;" width="18" height="21" viewBox="-0.5 0 17 20"><path d="M8,1L15,8V19H1V8Z" fill="#2b2b2b" stroke="#606366" stroke-width="1.6"/><path d="M5,12.5H11" stroke="#606366" stroke-width="1.6"/></svg>
<svg style="left:911px;top:963px;" width="18" height="21" viewBox="-0.5 0 17 20"><path d="M8,1L15,8V19H1V8Z" fill="#2b2b2b" stroke="#606366" stroke-width="1.6"/><path d="M5,12.5H11" stroke="#606366" stroke-width="1.6"/></svg>
<svg style="left:911px;top:999px;" width="18" height="21" viewBox="-0.5 0 17 20"><path d="M8,1L15,8V19H1V8Z" fill="#2b2b2b" stroke="#606366" stroke-width="1.6"/><path d="M5,12.5H11" stroke="#606366" stroke-width="1.6"/></svg>
<svg style="left:866px;top:704px;" width="30" height="30" viewBox="0 0 30 30"><circle cx="14" cy="16.5" r="11.5" fill="#c75450"/><path d="M12,10L17,15L26,4" fill="none" stroke="#2b2b2b" stroke-width="6"/><path d="M12.5,10L17,14.5L25.5,4.5" fill="none" stroke="#d8d8d8" stroke-width="2.6"/></svg>
<div style="left:2818px;top:608px;width:14px;height:267px;background:rgba(140,140,140,0.28);border-radius:7px;"></div>
<div style="left:2811px;top:770.5px;width:27px;height:3px;background:#2c8b2c;"></div>
<div style="left:2811px;top:882.5px;width:27px;height:3px;background:#2c8b2c;"></div>
</div></div>
<div style="left:786px;top:1052px;width:2052px;height:1px;background:#3a3c3e;"></div>
<div style="left:786px;top:1053px;width:2052px;height:44px;background:#313335;"></div>
<span class="t" style="left:941px;top:1060.2px;line-height:31px;font-size:24px;color:#bbbbbb;letter-spacing:0.8px;">PathMatchingFilterChainResolver</span>
<span class="t" style="left:1345px;top:1060.2px;line-height:31px;font-size:24px;color:#bbbbbb;letter-spacing:0.8px;">getChain()</span>
<svg style="left:1704px;top:11px;" width="31" height="30" viewBox="0 0 31 30"><path d="M1,8L9,1H16L19,4L14,9L29,25L25,29L10,13L5,13Z" fill="#499c54"/></svg>
<div style="left:1758px;top:4px;width:383px;height:43px;border:2px solid #5e6162;border-radius:7px;"></div>
<svg style="left:1772px;top:13px;" width="34" height="32" viewBox="0 0 34 32"><path d="M1,21C-1,12 6,7 14,7C20,7 24,4 26,0C28,8 27,16 21,21C15,25 8,24 4,22L2,25Z" fill="#445a40"/><path d="M18,13H27L31.5,21L27,29H18L13.5,21Z" fill="#5f666a"/><circle cx="22.5" cy="21" r="4" fill="none" stroke="#3c3f41" stroke-width="1.8"/><path d="M22.5,15.5V21" stroke="#5f666a" stroke-width="4"/><path d="M22.5,15.5V21" stroke="#3c3f41" stroke-width="1.8"/><circle cx="29" cy="27" r="4.2" fill="#2b2b2b"/><circle cx="29" cy="27" r="3.4" fill="#23d63a"/></svg>
<span class="t" style="left:1812px;top:11.0px;line-height:31px;font-size:24px;color:#bbbbbb;letter-spacing:-0.29px;">SpringbootShiroApplication</span>
<svg style="left:2110px;top:22px;" width="17" height="10" viewBox="0 0 17 10"><path d="M0,0H17L8.5,10Z" fill="#afb1b3"/></svg>
<svg style="left:2170px;top:14px;" width="20" height="24" viewBox="0 0 20 24"><path d="M0,0L20,12.0L0,24Z" fill="#499c54"/></svg>
<svg style="left:2215px;top:10px;" width="34" height="34" viewBox="0 0 34 34"><path d="M8,2L13,8M24,2L19,8" stroke="#499c54" stroke-width="3"/><path d="M16,6C21,6 24,10 24,14V22C24,27 21,30 16,30C11,30 8,27 8,22V14C8,10 11,6 16,6Z" fill="#499c54"/><path d="M4,12H28M4,18.5H28M4,25H28" stroke="#499c54" stroke-width="3"/><path d="M11,15.2H21M11,21.8H21" stroke="#3c3f41" stroke-width="2.6"/><circle cx="27.5" cy="28.5" r="5" fill="#2b2b2b"/><circle cx="27.5" cy="28.5" r="4" fill="#12e012"/></svg>
<svg style="left:2267px;top:13px;" width="32" height="30" viewBox="0 0 32 30"><path d="M1,3L11,0L21,3V10H14V22L17,20V24L11,26C4,23 1,17 1,10Z" fill="#afb1b3"/><path d="M17,11L30.5,19.5L17,28Z" fill="#499c54"/></svg>
<svg style="left:2319px;top:12px;" width="34" height="33" viewBox="0 0 34 33"><path d="M23.5,10A11,11 0 1 0 14,24" fill="none" stroke="#afb1b3" stroke-width="2.6"/><path d="M12.5,6V13L9,17" fill="none" stroke="#afb1b3" stroke-width="2.4"/><path d="M17,12L30.5,20.5L17,29Z" fill="#499c54"/><path d="M21.5,26.5H33L27.2,32Z" fill="#dddddd"/></svg>
<div style="left:2376px;top:16px;width:20px;height:20px;background:#c75450;"></div>
<div style="left:2418px;top:6px;width:2px;height:40px;background:#515355;"></div>
<span class="t" style="left:2438px;top:10.2px;line-height:31px;font-size:24px;color:#bbbbbb;letter-spacing:-0.34px;">Git:</span>
<svg style="left:2498px;top:13px;" width="25" height="25" viewBox="0 0 25 25"><path d="M22,2.5L7,17.5" stroke="#3592c4" stroke-width="4.6" fill="none"/><path d="M1.5,9.5V23.5H15.5Z" fill="#3592c4"/></svg>
<svg style="left:2548px;top:12px;" width="31" height="26" viewBox="0 0 31 26"><path d="M3,15L10.5,22.5L28,4" stroke="#499c54" stroke-width="4.6" fill="none"/></svg>
<svg style="left:2599px;top:11px;" width="30" height="30" viewBox="0 0 30 30"><circle cx="15" cy="15" r="12.5" fill="none" stroke="#5a5d5e" stroke-width="3"/><path d="M15,8V16L20,19.5" fill="none" stroke="#5a5d5e" stroke-width="3"/></svg>
<svg style="left:2653px;top:11px;" width="29" height="28" viewBox="0 0 29 28"><path d="M1,9L10,1V17Z" fill="#afb1b3"/><path d="M9,9H18A8,8 0 0 1 18,25H9" fill="none" stroke="#afb1b3" stroke-width="3.6"/></svg>
<div style="left:2698px;top:6px;width:2px;height:40px;background:#515355;"></div>
<svg style="left:2717px;top:15px;" width="30" height="26" viewBox="0 0 30 26"><path d="M0,0H10L13,4H29V9H14V21H0Z" fill="#afb1b3"/><rect x="22.5" y="11" width="6.5" height="6.5" fill="#3592c4"/><rect x="15" y="19" width="6.5" height="6.5" fill="#3592c4"/><rect x="22.5" y="19" width="6.5" height="6.5" fill="#3592c4"/></svg>
<div style="left:2764px;top:6px;width:2px;height:40px;background:#515355;"></div>
<svg style="left:2784px;top:14px;" width="28" height="24" viewBox="0 0 28 24"><rect x="1" y="1" width="26" height="22" fill="none" stroke="#afb1b3" stroke-width="2"/><rect x="0" y="0" width="28" height="5.5" fill="#afb1b3"/><path d="M6,8.5L16,14.5L6,20.5Z" fill="#499c54"/></svg>
<svg style="left:2834px;top:11px;" width="32" height="32" viewBox="0 0 32 32"><circle cx="13" cy="13" r="9.5" fill="none" stroke="#afb1b3" stroke-width="4"/><path d="M19.5,19.5L30,29" stroke="#afb1b3" stroke-width="4.6"/></svg>
<svg style="left:2848px;top:73px;" width="22" height="24" viewBox="0 0 22 24"><ellipse cx="11" cy="14.5" rx="4.2" ry="5.8" fill="#afb1b3"/><circle cx="11" cy="5.4" r="3.2" fill="#afb1b3"/><path d="M11,9L3.5,5L1.5,1M11,9L18.5,5L20.5,1M11,11H1M11,11H21M10,13L3.5,17.5V23M12,13L18.5,17.5V23" stroke="#afb1b3" stroke-width="1.35" fill="none"/></svg>
<span class="t" style="left:2858.9px;top:123.2px;line-height:29px;font-size:22px;color:#bbbbbb;letter-spacing:0.16px;transform:translate(-50%,-50%) rotate(90deg);">Ant</span>
<svg style="left:2848px;top:180px;" width="22" height="25" viewBox="0 0 22 25"><path d="M0,4.5A11,4.5 0 0 1 22,4.5V20.5A11,4.5 0 0 1 0,20.5Z" fill="#afb1b3"/><path d="M-1,9.2A12,4.6 0 0 0 23,9.2M-1,15.4A12,4.6 0 0 0 23,15.4" fill="none" stroke="#3c3f41" stroke-width="2"/></svg>
<span class="t" style="left:2858.9px;top:262.8px;line-height:29px;font-size:22px;color:#bbbbbb;letter-spacing:0.41px;transform:translate(-50%,-50%) rotate(90deg);">Database</span>
<span class="t" style="left:2845.5px;top:340.1px;line-height:43px;font-size:33px;color:#afb1b3;font-weight:bold;font-style:italic;">m</span>
<span class="t" style="left:2858.9px;top:418.5px;line-height:29px;font-size:22px;color:#bbbbbb;letter-spacing:0.19px;transform:translate(-50%,-50%) rotate(90deg);">Maven</span>
<svg style="left:2847px;top:496px;" width="26" height="26" viewBox="0 0 26 26"><path d="M12,1A11,11 0 0 1 23,12L12,12Z" fill="#afb1b3" transform="rotate(45 12 12)"/><circle cx="12" cy="12" r="10.5" fill="none" stroke="#afb1b3" stroke-width="0"/><path d="M12,1A11,11 0 1 0 21,18.5L12,12Z" fill="#afb1b3" transform="rotate(-20 12 12)"/><path d="M13,19L17.5,23.5L25,15" fill="none" stroke="#3c3f41" stroke-width="5"/><path d="M13.5,19L17.5,23L24.5,15.5" fill="none" stroke="#afb1b3" stroke-width="2.2"/></svg>
<span class="t" style="left:2858.9px;top:608.8px;line-height:29px;font-size:22px;color:#bbbbbb;letter-spacing:0.4px;transform:translate(-50%,-50%) rotate(90deg);">Bean Validation</span>
<div style="left:42px;top:1097px;width:2796px;height:616px;background:#3c3f41;"></div>
<div style="left:42px;top:1151px;width:2796px;height:2px;background:#323435;"></div>
<div style="left:98px;top:1153px;width:2px;height:560px;background:#323435;"></div>
<div style="left:100px;top:1207px;width:2738px;height:2px;background:#323435;"></div>
<div style="left:100px;top:1260px;width:2629px;height:2px;background:#323435;"></div>
<div style="left:1038px;top:1209px;width:2px;height:504px;background:#323435;"></div>
<div style="left:1088px;top:1262px;width:2px;height:451px;background:#323435;"></div>
<div style="left:2728px;top:1209px;width:2px;height:504px;background:#323435;"></div>
<span class="t" style="left:55px;top:1110.2px;line-height:31px;font-size:24px;color:#bbbbbb;letter-spacing:0.27px;">Debug:</span>
<svg style="left:174px;top:1111px;" width="34" height="32" viewBox="0 0 34 32"><path d="M1,21C-1,12 6,7 14,7C20,7 24,4 26,0C28,8 27,16 21,21C15,25 8,24 4,22L2,25Z" fill="#4b8d4b"/><path d="M18,13H27L31.5,21L27,29H18L13.5,21Z" fill="#9aa7b0"/><circle cx="22.5" cy="21" r="4" fill="none" stroke="#3c3f41" stroke-width="1.8"/><path d="M22.5,15.5V21" stroke="#9aa7b0" stroke-width="4"/><path d="M22.5,15.5V21" stroke="#3c3f41" stroke-width="1.8"/><circle cx="29" cy="27" r="4.2" fill="#2b2b2b"/><circle cx="29" cy="27" r="3.4" fill="#23d63a"/></svg>
<span class="t" style="left:214.6px;top:1110.2px;line-height:31px;font-size:24px;color:#bbbbbb;letter-spacing:0.74px;">SpringbootShiroApplication</span>
<svg style="left:538px;top:1118px;" width="16" height="16" viewBox="0 0 16 16"><path d="M1,1L15,15M15,1L1,15" stroke="#7a7e80" stroke-width="2" fill="none"/></svg>
<div style="left:150px;top:1147px;width:426px;height:5px;background:#747a80;"></div>
<svg style="left:2747px;top:1111px;" width="26" height="26" viewBox="-0.5 -0.5 27 27"><path d="M10.29,0.29L15.71,0.29L16.40,4.24L18.89,5.67L22.66,4.30L25.37,8.99L22.29,11.56L22.29,14.44L25.37,17.01L22.66,21.70L18.89,20.33L16.40,21.76L15.71,25.71L10.29,25.71L9.60,21.76L7.11,20.33L3.34,21.70L0.63,17.01L3.71,14.44L3.71,11.56L0.63,8.99L3.34,4.30L7.11,5.67L9.60,4.24Z" fill="#afb1b3" stroke="#afb1b3" stroke-width="1" stroke-linejoin="round"/><circle cx="13" cy="13" r="4.7" fill="#3c3f41"/></svg>
<div style="left:2800px;top:1122px;width:24px;height:4px;background:#afb1b3;"></div>
<svg style="left:57px;top:1165px;" width="30" height="30" viewBox="0 0 30 30"><path d="M16,7H9A8,8 0 0 0 9,26H13" fill="none" stroke="#499c54" stroke-width="4.4" transform="translate(2,-0.5)"/><path d="M16,0L28,7.5L16,15Z" fill="#499c54"/><rect x="15" y="18.5" width="10.5" height="10.5" fill="#c4c4c4"/></svg>
<div style="left:50px;top:1212px;width:40px;height:2px;background:#515355;"></div>
<div style="left:50px;top:1382px;width:40px;height:2px;background:#515355;"></div>
<div style="left:50px;top:1500px;width:40px;height:2px;background:#515355;"></div>
<div style="left:50px;top:1566px;width:40px;height:2px;background:#515355;"></div>
<div style="left:50px;top:1632px;width:40px;height:2px;background:#515355;"></div>
<div style="left:60px;top:1234px;width:6px;height:22.5px;background:#499c54;"></div>
<svg style="left:70px;top:1234px;" width="14.5" height="22.5" viewBox="0 0 14.5 22.5"><path d="M0,0L14.5,11.25L0,22.5Z" fill="#499c54"/></svg>
<div style="left:62px;top:1286px;width:6px;height:22px;background:#5a5d5e;"></div>
<div style="left:72px;top:1286px;width:6px;height:22px;background:#5a5d5e;"></div>
<div style="left:60px;top:1340px;width:20px;height:20px;background:#c75450;"></div>
<svg style="left:56px;top:1400px;" width="32" height="30" viewBox="0 0 32 30"><circle cx="20.3" cy="10.5" r="8.5" fill="#c75450"/><circle cx="11" cy="19" r="11.4" fill="#3c3f41"/><circle cx="11" cy="19" r="9.2" fill="#c75450"/></svg>
<svg style="left:56px;top:1454px;" width="28" height="28" viewBox="0 0 28 28"><circle cx="14" cy="14" r="10" fill="#c75450"/><path d="M2,26L26,2" stroke="#3c3f41" stroke-width="7"/><path d="M2.5,25.5L25.5,2.5" stroke="#afb1b3" stroke-width="2.8"/></svg>
<svg style="left:56px;top:1522px;" width="28" height="24" viewBox="0 0 28 24"><path d="M0,4H7L9.5,0H18.5L21,4H28V24H0Z" fill="#afb1b3"/><circle cx="14" cy="13.5" r="6.5" fill="#3c3f41"/><circle cx="14" cy="13.5" r="3.6" fill="#afb1b3"/></svg>
<svg style="left:57.5px;top:1587px;" width="25" height="25" viewBox="-0.5 -0.5 27 27"><path d="M10.29,0.29L15.71,0.29L16.40,4.24L18.89,5.67L22.66,4.30L25.37,8.99L22.29,11.56L22.29,14.44L25.37,17.01L22.66,21.70L18.89,20.33L16.40,21.76L15.71,25.71L10.29,25.71L9.60,21.76L7.11,20.33L3.34,21.70L0.63,17.01L3.71,14.44L3.71,11.56L0.63,8.99L3.34,4.30L7.11,5.67L9.60,4.24Z" fill="#afb1b3" stroke="#afb1b3" stroke-width="1" stroke-linejoin="round"/><circle cx="13" cy="13" r="4.7" fill="#3c3f41"/></svg>
<svg style="left:76px;top:1612px;" width="12" height="6.5" viewBox="0 0 12 6.5"><path d="M0,0H12L6.0,6.5Z" fill="#dddddd"/></svg>
<svg style="left:55px;top:1651px;" width="30" height="30" viewBox="0 0 30 30"><path d="M19,0L29,10L21,13L20,21L9,10L17,9Z" fill="#afb1b3"/><path d="M14,16L1,29" stroke="#afb1b3" stroke-width="2.6"/><path d="M0,30L12,14L16,18Z" fill="#afb1b3"/></svg>
<span class="t" style="left:126.7px;top:1166.4px;line-height:29px;font-size:22px;color:#bbbbbb;letter-spacing:0.54px;">Debugger</span>
<div style="left:100px;top:1204px;width:154px;height:4px;background:#747a80;"></div>
<svg style="left:279px;top:1169px;" width="30" height="28" viewBox="0 0 30 28"><rect x="0" y="1" width="24" height="20" fill="#afb1b3"/><path d="M5,6L11,11L5,16" fill="none" stroke="#3c3f41" stroke-width="2.6"/><circle cx="21" cy="19" r="8.5" fill="#3c3f41"/><circle cx="21" cy="19" r="7" fill="#f0a732"/><path d="M21,14.5V22.5M17.5,19.5L21,23L24.5,19.5" fill="none" stroke="#3c3f41" stroke-width="1.8"/></svg>
<span class="t" style="left:316.6px;top:1166.4px;line-height:29px;font-size:22px;color:#bbbbbb;letter-spacing:0.07px;">Console</span>
<svg style="left:439px;top:1165px;" width="30" height="30" viewBox="0 0 30 30"><path d="M16.5,6L7,23M16.5,6L23.5,23" stroke="#b55d2c" stroke-width="2.4" fill="none" transform="translate(1,0)"/><circle cx="17.5" cy="5.5" r="4.6" fill="#b55d2c"/><circle cx="6" cy="23.5" r="4.6" fill="#b55d2c"/><circle cx="24" cy="23.5" r="4.6" fill="#b55d2c"/><path d="M8,21L12,14" stroke="#b55d2c" stroke-width="2.4"/></svg>
<span class="t" style="left:478.3px;top:1166.4px;line-height:29px;font-size:22px;color:#bbbbbb;letter-spacing:0.27px;">Endpoints</span>
<div style="left:610px;top:1168px;width:24px;height:4.3px;background:#afb1b3;"></div>
<div style="left:610px;top:1175.8px;width:24px;height:6.2px;background:#3592c4;"></div>
<div style="left:610px;top:1186px;width:24px;height:4.3px;background:#afb1b3;"></div>
<div style="left:654px;top:1158px;width:2px;height:40px;background:#515355;"></div>
<div style="left:676px;top:1186px;width:24px;height:4.3px;background:#afb1b3;"></div>
<svg style="left:674px;top:1163px;" width="28" height="22" viewBox="0 0 28 22"><path d="M2,13L11,4L19,12" fill="none" stroke="#3592c4" stroke-width="3.8"/><path d="M26,5.5V19.5H12Z" fill="#3592c4"/></svg>
<div style="left:728px;top:1186px;width:24px;height:4.3px;background:#afb1b3;"></div>
<svg style="left:728px;top:1163px;" width="24" height="21" viewBox="0 0 24 21"><path d="M12,1V12" stroke="#3592c4" stroke-width="5.4"/><path d="M3,10.5H21L12,20.5Z" fill="#3592c4"/></svg>
<div style="left:780px;top:1186px;width:24px;height:4.3px;background:#afb1b3;"></div>
<svg style="left:780px;top:1163px;" width="24" height="21" viewBox="0 0 24 21"><path d="M12,1V12" stroke="#c75450" stroke-width="5.4"/><path d="M3,10.5H21L12,20.5Z" fill="#c75450"/></svg>
<div style="left:832px;top:1186px;width:24px;height:4.3px;background:#afb1b3;"></div>
<svg style="left:832px;top:1163px;" width="24" height="21" viewBox="0 0 24 21"><path d="M12,20V9" stroke="#3592c4" stroke-width="5.4"/><path d="M3,11H21L12,1Z" fill="#3592c4"/></svg>
<svg style="left:882px;top:1164px;" width="28" height="28" viewBox="0 0 28 28"><path d="M2,2L14,14M14,2L2,14" stroke="#c75450" stroke-width="4"/><path d="M17,10H24.5V24.5H10V17" fill="none" stroke="#afb1b3" stroke-width="3.2"/></svg>
<svg style="left:934px;top:1164px;" width="30" height="30" viewBox="0 0 30 30"><path d="M2.5,2.5L11,11" stroke="#3592c4" stroke-width="4.2"/><path d="M16.5,4V16.5H4Z" fill="#3592c4"/><path d="M18,12.5H21.5M23.5,12.5H27M18,27.5H21.5M23.5,27.5H27M22.5,13V27" stroke="#afb1b3" stroke-width="1.8" fill="none"/></svg>
<div style="left:980px;top:1158px;width:2px;height:40px;background:#515355;"></div>
<svg style="left:1002px;top:1166px;" width="24" height="24" viewBox="0 0 24 24"><rect width="24" height="24" fill="#afb1b3"/><rect x="3" y="3" width="18" height="5" fill="#3c3f41"/><rect x="3.0" y="11.0" width="4.6" height="3.6" fill="#3c3f41"/><rect x="3.0" y="16.5" width="4.6" height="3.6" fill="#3c3f41"/><rect x="9.5" y="11.0" width="4.6" height="3.6" fill="#3c3f41"/><rect x="9.5" y="16.5" width="4.6" height="3.6" fill="#3c3f41"/><rect x="16.0" y="11.0" width="4.6" height="3.6" fill="#3c3f41"/><rect x="16.0" y="16.5" width="4.6" height="3.6" fill="#3c3f41"/></svg>
<svg style="left:1054px;top:1168px;" width="24" height="22" viewBox="0 0 24 22"><path d="M0,2H10M15,2H24M0,10.5H8M13,10.5H24M0,19H8M15,19H24" stroke="#5a5d5e" stroke-width="3.6"/><path d="M8,19C12,19 12,2 16,2" stroke="#5a5d5e" stroke-width="2.6" fill="none"/></svg>
<svg style="left:2797px;top:1168px;" width="32" height="28" viewBox="0 0 32 28"><rect x="0" y="0" width="15" height="10" fill="#afb1b3"/><rect x="17" y="0" width="8" height="10" fill="#afb1b3"/><rect x="0" y="12" width="25" height="9" fill="#afb1b3"/><path d="M19,21H31L25,27Z" fill="#dddddd" stroke="#3c3f41" stroke-width="1"/></svg>
<span class="t" style="left:126.7px;top:1220.4px;line-height:29px;font-size:22px;color:#bbbbbb;letter-spacing:-0.46px;">Frames</span>
<span class="t" style="left:250.5px;top:1220.4px;line-height:29px;font-size:22px;color:#bbbbbb;letter-spacing:0.21px;">Threads</span>
<div style="left:100px;top:1258px;width:126px;height:4px;background:#747a80;"></div>
<span class="t" style="left:1066.5px;top:1220.4px;line-height:29px;font-size:22px;color:#bbbbbb;letter-spacing:0.46px;">Variables</span>
<div style="left:106px;top:1268px;width:762px;height:48px;border:2px solid #5e6162;border-radius:7px;"></div>
<svg style="left:121px;top:1279px;" width="30" height="26" viewBox="0 0 30 26"><path d="M3,15L10,22L27,3" fill="none" stroke="#c4602d" stroke-width="5"/></svg>
<span class="t" style="left:159.4px;top:1276.0px;line-height:34px;font-size:26px;color:#bbbbbb;letter-spacing:1.28px;">&quot;http-nio-8080-exec-1&quot;...n group &quot;main&quot;: RUNNING</span>
<svg style="left:836px;top:1288px;" width="17.5" height="9.5" viewBox="0 0 17.5 9.5"><path d="M0,0H17.5L8.75,9.5Z" fill="#afb1b3"/></svg>
<svg style="left:893px;top:1280px;" width="22" height="24" viewBox="0 0 22 24"><path d="M11,23V3M2,11.5L11,2.5L20,11.5" fill="none" stroke="#5a5d5e" stroke-width="3.4"/></svg>
<svg style="left:945px;top:1280px;" width="22" height="24" viewBox="0 0 22 24"><path d="M11,1V21M2,12.5L11,21.5L20,12.5" fill="none" stroke="#afb1b3" stroke-width="3.4"/></svg>
<svg style="left:995px;top:1280px;" width="26" height="24" viewBox="0 0 26 24"><path d="M0,0H26L15.5,11.5V24H10.5V11.5Z" fill="#afb1b3"/></svg>
<div style="left:100px;top:1322px;width:938px;height:2px;background:#313335;"></div>
<div style="left:100px;top:1326px;width:938px;height:40px;background:#2f65ca;"></div>
<div style="left:100px;top:1366px;width:938px;height:346px;background:#4e4b41;"></div>
<div style="left:100px;top:1326px;width:938px;height:386px;overflow:hidden;"><div style="left:-100px;top:-1326px;width:2878px;height:1796px;">
<span class="t" style="left:132px;top:1329.8px;line-height:34px;font-size:26px;color:#ffffff;letter-spacing:0.8px;">getChain:123, PathMatchingFilterChainResolver</span>
<span class="t" style="left:735.4px;top:1329.8px;line-height:34px;font-size:26px;color:#ffffff;font-style:italic;letter-spacing:1.06px;">(org.apache.shiro.web.filter.mgt)</span>
<span class="t" style="left:132px;top:1369.8px;line-height:34px;font-size:26px;color:#7d7d7d;letter-spacing:0.99px;">getExecutionChain:416, AbstractShiroFilter</span>
<span class="t" style="left:679.5px;top:1369.8px;line-height:34px;font-size:26px;color:#7d7d7d;font-style:italic;letter-spacing:1.06px;">(org.apache.shiro.web.servlet)</span>
<span class="t" style="left:132px;top:1409.8px;line-height:34px;font-size:26px;color:#7d7d7d;letter-spacing:1.12px;">executeChain:449, AbstractShiroFilter</span>
<span class="t" style="left:620.6px;top:1409.8px;line-height:34px;font-size:26px;color:#7d7d7d;font-style:italic;letter-spacing:1.06px;">(org.apache.shiro.web.servlet)</span>
<span class="t" style="left:132px;top:1449.8px;line-height:34px;font-size:26px;color:#7d7d7d;letter-spacing:0.89px;">call:365, AbstractShiroFilter$1</span>
<span class="t" style="left:515.7px;top:1449.8px;line-height:34px;font-size:26px;color:#7d7d7d;font-style:italic;letter-spacing:1.09px;">(org.apache.shiro.web.servlet)</span>
<span class="t" style="left:132px;top:1489.8px;line-height:34px;font-size:26px;color:#7d7d7d;letter-spacing:0.58px;">doCall:90, SubjectCallable</span>
<span class="t" style="left:463.7px;top:1489.8px;line-height:34px;font-size:26px;color:#7d7d7d;font-style:italic;letter-spacing:1.17px;">(org.apache.shiro.subject.support)</span>
<span class="t" style="left:132px;top:1529.8px;line-height:34px;font-size:26px;color:#7d7d7d;letter-spacing:0.57px;">call:83, SubjectCallable</span>
<span class="t" style="left:428px;top:1529.8px;line-height:34px;font-size:26px;color:#7d7d7d;font-style:italic;letter-spacing:1.13px;">(org.apache.shiro.subject.support)</span>
<span class="t" style="left:132px;top:1569.8px;line-height:34px;font-size:26px;color:#7d7d7d;letter-spacing:1.17px;">execute:387, DelegatingSubject</span>
<span class="t" style="left:546px;top:1569.8px;line-height:34px;font-size:26px;color:#7d7d7d;font-style:italic;letter-spacing:1.14px;">(org.apache.shiro.subject.support)</span>
<span class="t" style="left:132px;top:1609.8px;line-height:34px;font-size:26px;color:#7d7d7d;letter-spacing:1.13px;">doFilterInternal:362, AbstractShiroFilter</span>
<span class="t" style="left:640px;top:1609.8px;line-height:34px;font-size:26px;color:#7d7d7d;font-style:italic;letter-spacing:1.07px;">(org.apache.shiro.web.servlet)</span>
<span class="t" style="left:132px;top:1649.8px;line-height:34px;font-size:26px;color:#7d7d7d;letter-spacing:0.94px;">doFilter:125, OncePerRequestFilter</span>
<span class="t" style="left:583.7px;top:1649.8px;line-height:34px;font-size:26px;color:#7d7d7d;font-style:italic;letter-spacing:1.07px;">(org.apache.shiro.web.servlet)</span>
<span class="t" style="left:132px;top:1689.8px;line-height:34px;font-size:26px;color:#7d7d7d;letter-spacing:0.89px;">internalDoFilter:193, ApplicationFilterChain</span>
<span class="t" style="left:676px;top:1689.8px;line-height:34px;font-size:26px;color:#7d7d7d;font-style:italic;letter-spacing:0.8px;">(org.apache.catalina.core)</span>
</div></div>
<svg style="left:1054px;top:1278px;" width="20" height="20" viewBox="0 0 20 20"><path d="M10,0V20M0,10H20" stroke="#afb1b3" stroke-width="3.4"/></svg>
<div style="left:1054px;top:1338px;width:20px;height:4px;background:#5a5c5d;"></div>
<svg style="left:1052px;top:1387px;" width="24" height="11" viewBox="0 0 24 11"><path d="M0,11L12,0L24,11Z" fill="#55585a"/></svg>
<svg style="left:1052px;top:1438px;" width="24" height="11" viewBox="0 0 24 11"><path d="M0,0L12,11L24,0Z" fill="#55585a"/></svg>
<svg style="left:1051px;top:1481px;" width="26" height="28" viewBox="0 0 26 28"><path d="M1.5,19V1.5H17" fill="none" stroke="#afb1b3" stroke-width="3"/><rect x="6" y="6" width="19" height="21" fill="#afb1b3"/><path d="M10,12H21M10,16.5H21M10,21H21" stroke="#3c3f41" stroke-width="2.2"/></svg>
<div style="left:1042px;top:1526px;width:44px;height:44px;background:#5c6164;border-radius:5px;"></div>
<svg style="left:1048px;top:1540px;" width="32" height="16" viewBox="0 0 32 16"><ellipse cx="8" cy="9" rx="6.3" ry="5.6" fill="none" stroke="#bbbdbf" stroke-width="3"/><ellipse cx="24" cy="9" rx="6.3" ry="5.6" fill="none" stroke="#bbbdbf" stroke-width="3"/><path d="M1.5,7.5C2,2.5 7,2.5 10,3.2M30.5,7.5C30,2.5 25,2.5 22,3.2M13.5,7.5C15,6 17,6 18.5,7.5" fill="none" stroke="#bbbdbf" stroke-width="2.2"/></svg>
<div style="left:1090px;top:1464px;width:1638px;height:40px;background:#0d293e;"></div>
<svg style="left:1096px;top:1274px;" width="15.5" height="18" viewBox="0 0 15.5 18"><path d="M0,0L15.5,9.0L0,18Z" fill="#9b9b9b"/></svg>
<svg style="left:1136px;top:1272px;" width="20" height="22" viewBox="0 0 20 22"><rect x="0" y="0" width="20" height="5" fill="#b3893c"/><rect x="0" y="8" width="20" height="5" fill="#b3893c"/><rect x="0" y="16" width="20" height="5" fill="#b3893c"/></svg>
<span class="t" style="left:1168px;top:1267.5px;line-height:34px;font-size:26px;color:#f08586;letter-spacing:1.7px;">this</span>
<svg style="left:1096px;top:1314px;" width="15.5" height="18" viewBox="0 0 15.5 18"><path d="M0,0L15.5,9.0L0,18Z" fill="#9b9b9b"/></svg>
<svg style="left:1133px;top:1310px;" width="27" height="27" viewBox="0 0 27 27"><circle cx="13.5" cy="13.5" r="13.5" fill="#b3893c"/><text x="13.5" y="19" text-anchor="middle" font-family="Liberation Sans, sans-serif" font-size="20" fill="#3a2f1a">p</text></svg>
<span class="t" style="left:1168px;top:1307.5px;line-height:34px;font-size:26px;color:#f08586;letter-spacing:1.7px;">requ</span>
<svg style="left:1096px;top:1354px;" width="15.5" height="18" viewBox="0 0 15.5 18"><path d="M0,0L15.5,9.0L0,18Z" fill="#9b9b9b"/></svg>
<svg style="left:1133px;top:1350px;" width="27" height="27" viewBox="0 0 27 27"><circle cx="13.5" cy="13.5" r="13.5" fill="#b3893c"/><text x="13.5" y="19" text-anchor="middle" font-family="Liberation Sans, sans-serif" font-size="20" fill="#3a2f1a">p</text></svg>
<span class="t" style="left:1168px;top:1347.5px;line-height:34px;font-size:26px;color:#f08586;letter-spacing:1.7px;">resp</span>
<svg style="left:1096px;top:1394px;" width="15.5" height="18" viewBox="0 0 15.5 18"><path d="M0,0L15.5,9.0L0,18Z" fill="#9b9b9b"/></svg>
<svg style="left:1133px;top:1390px;" width="27" height="27" viewBox="0 0 27 27"><circle cx="13.5" cy="13.5" r="13.5" fill="#b3893c"/><text x="13.5" y="19" text-anchor="middle" font-family="Liberation Sans, sans-serif" font-size="20" fill="#3a2f1a">p</text></svg>
<span class="t" style="left:1168px;top:1387.5px;line-height:34px;font-size:26px;color:#f08586;letter-spacing:1.7px;">origi</span>
<svg style="left:1096px;top:1434px;" width="15.5" height="18" viewBox="0 0 15.5 18"><path d="M0,0L15.5,9.0L0,18Z" fill="#9b9b9b"/></svg>
<svg style="left:1136px;top:1432px;" width="20" height="22" viewBox="0 0 20 22"><rect x="0" y="0" width="20" height="5" fill="#b3893c"/><rect x="0" y="8" width="20" height="5" fill="#b3893c"/><rect x="0" y="16" width="20" height="5" fill="#b3893c"/></svg>
<span class="t" style="left:1168px;top:1427.5px;line-height:34px;font-size:26px;color:#f08586;letter-spacing:1.7px;">filter</span>
<svg style="left:1096px;top:1474px;" width="15.5" height="18" viewBox="0 0 15.5 18"><path d="M0,0L15.5,9.0L0,18Z" fill="#9b9b9b"/></svg>
<svg style="left:1136px;top:1472px;" width="20" height="22" viewBox="0 0 20 22"><rect x="0" y="0" width="20" height="5" fill="#b3893c"/><rect x="0" y="8" width="20" height="5" fill="#b3893c"/><rect x="0" y="16" width="20" height="5" fill="#b3893c"/></svg>
<span class="t" style="left:1168px;top:1467.5px;line-height:34px;font-size:26px;color:#f08586;letter-spacing:1.7px;">requ</span>
<svg style="left:1096px;top:1514px;" width="15.5" height="18" viewBox="0 0 15.5 18"><path d="M0,0L15.5,9.0L0,18Z" fill="#9b9b9b"/></svg>
<svg style="left:1136px;top:1512px;" width="20" height="22" viewBox="0 0 20 22"><rect x="0" y="0" width="20" height="5" fill="#b3893c"/><rect x="0" y="8" width="20" height="5" fill="#b3893c"/><rect x="0" y="16" width="20" height="5" fill="#b3893c"/></svg>
<span class="t" style="left:1168px;top:1507.5px;line-height:34px;font-size:26px;color:#f08586;letter-spacing:1.7px;">path</span>
<span class="t" style="left:1226px;top:1267.5px;line-height:34px;font-size:26px;color:#bbbbbb;">=</span>
<svg style="left:2784px;top:1230px;" width="24" height="16" viewBox="0 0 24 16"><path d="M0,5H11L5.5,11Z" fill="#afb1b3"/></svg>
<div style="left:2798px;top:1229.5px;width:15px;height:2px;background:#afb1b3;"></div>
<div style="left:2798px;top:1233.8px;width:15px;height:2px;background:#afb1b3;"></div>
<div style="left:2798px;top:1238.1px;width:15px;height:2px;background:#afb1b3;"></div>
<div style="left:2798px;top:1242.4px;width:15px;height:2px;background:#afb1b3;"></div>
<span class="t" style="left:2817px;top:1227.3px;line-height:23px;font-size:18px;color:#afb1b3;">2</span>
<div style="left:2730px;top:1258px;width:46px;height:4px;background:#747a80;"></div>
<div style="left:2736px;top:1268px;width:38px;height:48px;background:#45494a;border:2px solid #5e6162;border-radius:7px;"></div>
<svg style="left:2750px;top:1279px;clip-path:inset(0 4px 0 0);" width="26" height="26" viewBox="0 0 26 26"><circle cx="12" cy="11.5" r="8.8" fill="none" stroke="#7f8b91" stroke-width="2"/><path d="M18.5,18L25,24.5" stroke="#7f8b91" stroke-width="2.2"/></svg>
<svg style="left:2795px;top:1279px;" width="26" height="26" viewBox="-0.5 -0.5 27 27"><path d="M10.29,0.29L15.71,0.29L16.40,4.24L18.89,5.67L22.66,4.30L25.37,8.99L22.29,11.56L22.29,14.44L25.37,17.01L22.66,21.70L18.89,20.33L16.40,21.76L15.71,25.71L10.29,25.71L9.60,21.76L7.11,20.33L3.34,21.70L0.63,17.01L3.71,14.44L3.71,11.56L0.63,8.99L3.34,4.30L7.11,5.67L9.60,4.24Z" fill="#afb1b3" stroke="#afb1b3" stroke-width="1" stroke-linejoin="round"/><circle cx="13" cy="13" r="4.7" fill="#3c3f41"/></svg>
<svg style="left:2811px;top:1300px;" width="12" height="6.5" viewBox="0 0 12 6.5"><path d="M0,0H12L6.0,6.5Z" fill="#dddddd"/></svg>
<div style="left:2730px;top:1322px;width:108px;height:48px;background:#45494b;"></div>
<div style="left:2730px;top:1370px;width:108px;height:2px;background:#323435;"></div>
<span class="t" style="left:2746px;top:1331.2px;line-height:31px;font-size:24px;color:#bbbbbb;letter-spacing:1px;">..</span>
<div style="left:2758px;top:1325px;width:2px;height:42px;background:#2b2d2e;"></div>
<span class="t" style="left:2776.5px;top:1331.2px;line-height:31px;font-size:24px;color:#bbbbbb;letter-spacing:-0.41px;width:61px;overflow:hidden;">Count</span>
<span class="t" style="left:2729.5px;top:1476.0px;line-height:34px;font-size:26px;color:#8c8c8c;letter-spacing:1.04px;">oaded. </span>
<span class="t" style="left:2823px;top:1476.0px;line-height:34px;font-size:26px;color:#589df6;letter-spacing:0.78px;width:15px;overflow:hidden;">Load</span>
<div style="left:0px;top:1712px;width:2878px;height:1.5px;background:#2f3132;"></div>
<div style="left:0px;top:1713.5px;width:2878px;height:83px;background:#3c3f41;"></div>
<div style="left:0px;top:1754px;width:2878px;height:1.5px;background:#454749;"></div>
<svg style="left:69px;top:1723px;" width="23" height="24" viewBox="0 0 23 24"><path d="M2,0V24" stroke="#afb1b3" stroke-width="4"/><path d="M2,15H13V8" fill="none" stroke="#afb1b3" stroke-width="3.6"/><path d="M5.5,10L13,1.5L20.5,10Z" fill="#afb1b3"/></svg>
<span class="t" style="left:99.8px;top:1720.2px;line-height:29px;font-size:22px;color:#bbbbbb;letter-spacing:0.34px;">9: Version Control</span>
<div style="left:100px;top:1744px;width:12.5px;height:2px;background:#bbbbbb;"></div>
<svg style="left:329.5px;top:1724px;" width="23" height="21" viewBox="0 0 23 21"><rect width="23" height="21" fill="#afb1b3"/><path d="M4,5L9.5,10L4,15" fill="none" stroke="#3c3f41" stroke-width="2.4"/><path d="M11,16H18" stroke="#3c3f41" stroke-width="2.4"/></svg>
<span class="t" style="left:363px;top:1720.2px;line-height:29px;font-size:22px;color:#bbbbbb;letter-spacing:0.29px;">Terminal</span>
<svg style="left:489px;top:1723px;" width="27" height="25" viewBox="0 0 27 25"><path d="M1,7L8,1H13L16,4L12,8L26,21L22,25L9,11L5,11Z" fill="#afb1b3"/></svg>
<span class="t" style="left:524.8px;top:1720.2px;line-height:29px;font-size:22px;color:#bbbbbb;letter-spacing:0.16px;">Build</span>
<svg style="left:618px;top:1721px;" width="29" height="28" viewBox="0 0 29 28"><path d="M11,4.5A11.5,11.5 0 1 0 24,17" fill="none" stroke="#8a8d8f" stroke-width="2.2"/><path d="M15.5,1.2V12.5H26.8A11.3,11.3 0 0 0 15.5,1.2Z" fill="none" stroke="#8a8d8f" stroke-width="2.2"/></svg>
<span class="t" style="left:656.7px;top:1720.2px;line-height:29px;font-size:22px;color:#bbbbbb;letter-spacing:0.89px;">Statistic</span>
<svg style="left:787.5px;top:1724px;" width="25" height="24" viewBox="0 0 25 24"><path d="M0,0H20V7H7V21H0Z" fill="#afb1b3"/><rect x="8" y="9" width="17" height="15" fill="#afb1b3"/><path d="M15,12.5H11.5V20.5H15M11.5,16.5H14.5 M21.5,12.5H18V20.5H21.5M18,16.5H21" fill="none" stroke="#3c3f41" stroke-width="1.7"/></svg>
<span class="t" style="left:820.5px;top:1720.2px;line-height:29px;font-size:22px;color:#bbbbbb;letter-spacing:0.3px;">Java Enterprise</span>
<svg style="left:1024px;top:1722px;" width="26" height="23" viewBox="0 0 26 23"><path d="M1,17C0,9 6,5 13,5C19,5 23,3 25,0C26.5,8 25,15 19,19C13,22.5 6,21 3.5,19.5L1.5,22.5Z" fill="#afb1b3"/></svg>
<span class="t" style="left:1059px;top:1720.2px;line-height:29px;font-size:22px;color:#bbbbbb;letter-spacing:0.3px;">Spring</span>
<svg style="left:1167px;top:1723px;" width="24" height="24" viewBox="0 0 24 24"><circle cx="12" cy="12" r="10.3" fill="none" stroke="#afb1b3" stroke-width="2.6"/><path d="M5,5C8,6 10,9 9,11C8,13 5,13 4,16C3,14 2,9 5,5ZM14,2C14,5 17,6 18,8C19,10 16,11 16,13C16,15 19,15 20,17C22,13 22,5 14,2ZM9,16C11,15 13,17 13,19C13,21 11,22 10,22C8,21 8,18 9,16Z" fill="#afb1b3"/></svg>
<span class="t" style="left:1200.6px;top:1720.2px;line-height:29px;font-size:22px;color:#bbbbbb;letter-spacing:0.3px;">Endpoints</span>
<svg style="left:2684px;top:1721.5px;" width="27" height="27" viewBox="0 0 27 27"><path d="M13.5,0A13.5,13.5 0 1 0 13.5,27H27V13.5A13.5,13.5 0 0 0 13.5,0Z" fill="#499c54"/><text x="13.5" y="20.5" text-anchor="middle" font-family="Liberation Sans, sans-serif" font-weight="bold" font-size="19" fill="#ffffff">1</text></svg>
<span class="t" style="left:2718.8px;top:1720.2px;line-height:29px;font-size:22px;color:#bbbbbb;letter-spacing:-0.15px;">Event Log</span>
<svg style="left:11px;top:1765px;" width="26" height="26" viewBox="0 0 26 26"><rect x="6" y="1" width="19" height="19" fill="none" stroke="#afb1b3" stroke-width="2"/><path d="M1,6V25H20" fill="none" stroke="#afb1b3" stroke-width="2"/></svg>
<span class="t" style="left:62.6px;top:1764.2px;line-height:29px;font-size:22px;color:#bbbbbb;letter-spacing:0.59px;">All files are up-to-date (5 minutes ago)</span>
<span class="t" style="left:2408px;top:1764.2px;line-height:29px;font-size:22px;color:#bbbbbb;letter-spacing:-0.08px;">1:35</span>
<span class="t" style="left:2476.6px;top:1764.2px;line-height:29px;font-size:22px;color:#7f8284;letter-spacing:-1.14px;">LF</span>
<span class="t" style="left:2524.7px;top:1764.2px;line-height:29px;font-size:22px;color:#7f8284;letter-spacing:0.39px;">UTF-8</span>
<span class="t" style="left:2614px;top:1764.2px;line-height:29px;font-size:22px;color:#bbbbbb;letter-spacing:0.2px;">Git: main</span>
<svg style="left:2728px;top:1762px;" width="25" height="27" viewBox="0 0 25 27"><path d="M6,9V3C6,1 8,0 12.5,0C17,0 19,1 19,3V9Z" fill="#5a5d5e"/><rect x="0" y="8.5" width="25" height="3" fill="#5a5d5e"/><path d="M6,12H19V17C19,20 16,22 12.5,22C9,22 6,20 6,17Z" fill="#5a5d5e"/><path d="M2,27C3,22 8,21.5 12.5,24C17,21.5 22,22 23,27Z" fill="#5a5d5e"/></svg>
<svg style="left:2771px;top:1761px;" width="34" height="31" viewBox="0 0 34 31"><path d="M7,22A7,7 0 0 1 7,8.5A9.5,9.5 0 0 1 25,7A7.5,7.5 0 0 1 29,20L22,22Z" fill="#afb1b3"/><text x="16" y="18.5" text-anchor="middle" font-family="Liberation Sans, sans-serif" font-weight="bold" font-size="18" fill="#3c3f41">?</text><circle cx="26" cy="24" r="7.5" fill="#3c3f41"/></svg><svg style="left:2788.5px;top:1776.5px;" width="15" height="15" viewBox="-0.5 -0.5 27 27"><path d="M10.29,0.29L15.71,0.29L16.40,4.24L18.89,5.67L22.66,4.30L25.37,8.99L22.29,11.56L22.29,14.44L25.37,17.01L22.66,21.70L18.89,20.33L16.40,21.76L15.71,25.71L10.29,25.71L9.60,21.76L7.11,20.33L3.34,21.70L0.63,17.01L3.71,14.44L3.71,11.56L0.63,8.99L3.34,4.30L7.11,5.67L9.60,4.24Z" fill="#afb1b3" stroke="#afb1b3" stroke-width="1" stroke-linejoin="round"/><circle cx="13" cy="13" r="4.7" fill="#3c3f41"/></svg>
<svg style="left:2826px;top:1761px;" width="30" height="32" viewBox="0 0 30 32"><path d="M10,0H20V17H10A6,6 0 0 1 4,11V6A6,6 0 0 1 10,0Z" fill="#7f8b91"/><path d="M20,3H29M20,14H29" stroke="#afb1b3" stroke-width="2.4"/><path d="M4,9C-1,12 0,27 10,30H16" fill="none" stroke="#7f8b91" stroke-width="2"/></svg>
<div style="left:1226px;top:884px;width:948px;height:942px;background:#3c3f41;border-radius:20px;border:1.6px solid #6c6e6f;box-shadow:0 14px 36px 2px rgba(0,0,0,0.42), 0 36px 100px 12px rgba(0,0,0,0.33), 0 0 0 1.2px rgba(0,0,0,0.85);overflow:hidden;"><div style="left:0;top:0;width:948px;height:56px;background:#383a3a;border-bottom:1.6px solid #1a1b1b;"></div></div>
<div style="left:1242px;top:900px;width:24px;height:24px;background:#ff5753;border-radius:12px;"></div>
<div style="left:1282px;top:900px;width:24px;height:24px;background:#5b5d5d;border-radius:12px;"></div>
<div style="left:1322px;top:900px;width:24px;height:24px;background:#00c546;border-radius:12px;"></div>
<span class="t" style="left:1645px;top:893.5px;line-height:34px;font-size:26px;color:#b9bbbd;font-weight:bold;letter-spacing:0.28px;">Evaluate</span>
<span class="t" style="left:1250.8px;top:955.3px;line-height:34px;font-size:26px;color:#bbbbbb;letter-spacing:0.76px;">Expression:</span>
<div style="left:1252px;top:1000px;width:896px;height:56px;background:#45494a;border:6px solid #3d6185;border-radius:9px;"></div>
<div style="left:1256px;top:1004px;width:888px;height:48px;border:2px solid #466d94;border-radius:5px;"></div>
<div style="left:2099px;top:1006px;width:2px;height:44px;background:#646464;"></div>
<svg style="left:2112px;top:1023px;" width="17.5" height="10" viewBox="0 0 17.5 10"><path d="M0,0H17.5L8.75,10Z" fill="#afb1b3"/></svg>
<svg style="left:2056px;top:1013px;" width="26" height="26" viewBox="0 0 26 26"><path d="M15,2H24V11M24,2L15.5,10.5M11,24H2V15M2,24L10.5,15.5" fill="none" stroke="#7f8385" stroke-width="2"/></svg>
<span class="t c" style="left:1268px;top:1009.0px;line-height:36px;"><span style="color:#a9b7c6;">pathMatches</span><span style="color:#ffef28;font-weight:bold;background:#3b514d;">(</span><span style="color:#6a8759;">&quot;/admin/*&quot;</span><span style="color:#cc7832;">,</span><span style="color:#6a8759;">&quot;/admin/1&quot;</span><span style="color:#ffef28;font-weight:bold;background:#3b514d;">)</span></span>
<span class="t" style="left:1846.5px;top:1064.2px;line-height:27px;font-size:21px;color:#7d8082;font-family:'Liberation Sans','DejaVu Sans',sans-serif;letter-spacing:1.18px;">Use ⇧⌘↵ to add to Watches</span>
<span class="t" style="left:1250.8px;top:1101.5px;line-height:34px;font-size:26px;color:#bbbbbb;letter-spacing:0.75px;">Result:</span>
<div style="left:1250px;top:1135px;width:900px;height:700px;border:2px solid #323435;"></div>
<div style="left:1252px;top:1138px;width:896px;height:40px;background:#0d293e;"></div>
<svg style="left:1292px;top:1150px;" width="32" height="16" viewBox="0 0 32 16"><ellipse cx="8" cy="9" rx="6.3" ry="5.6" fill="none" stroke="#9aa7b0" stroke-width="3"/><ellipse cx="24" cy="9" rx="6.3" ry="5.6" fill="none" stroke="#9aa7b0" stroke-width="3"/><path d="M1.5,7.5C2,2.5 7,2.5 10,3.2M30.5,7.5C30,2.5 25,2.5 22,3.2M13.5,7.5C15,6 17,6 18.5,7.5" fill="none" stroke="#9aa7b0" stroke-width="2.2"/></svg>
<span class="t" style="left:1330.5px;top:1141.0px;line-height:34px;font-size:26px;color:#f08586;letter-spacing:1.15px;">result</span>
<span class="t" style="left:1401px;top:1141.0px;line-height:34px;font-size:26px;color:#bbbbbb;letter-spacing:1.27px;"> = true</span>
</div>
</body></html>
